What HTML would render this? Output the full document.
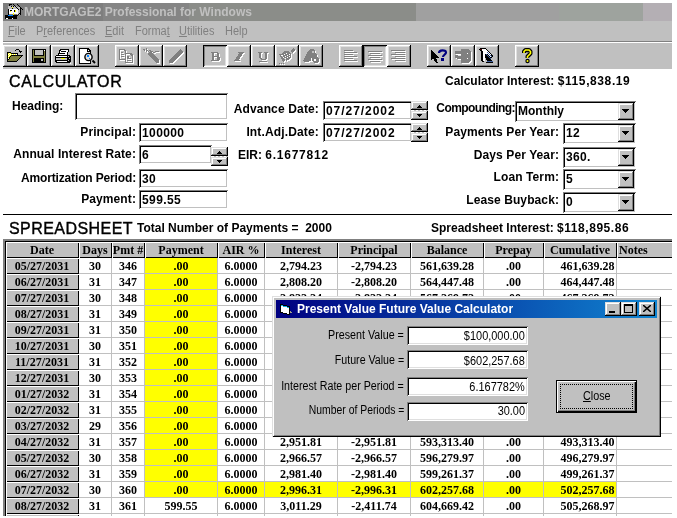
<!DOCTYPE html>
<html><head><meta charset="utf-8"><style>
html,body{margin:0;padding:0;background:#fff;}
body{width:677px;height:518px;position:relative;overflow:hidden;}
#clip{position:absolute;left:3px;top:3px;width:669px;height:513px;overflow:hidden;}
#inner{position:absolute;left:-3px;top:-3px;width:677px;height:518px;will-change:transform;}
.t{position:absolute;white-space:nowrap;}
.r{position:absolute;box-sizing:border-box;}
u{text-decoration:underline;text-underline-offset:1px;}
</style></head><body><div id="clip"><div id="inner">
<div class="r" style="left:3px;top:3px;width:100px;height:18px;background:#7e7e7e;"></div>
<div class="r" style="left:103px;top:3px;width:86px;height:18px;background:#858585;"></div>
<div class="r" style="left:189px;top:3px;width:227px;height:18px;background:#8b8d89;"></div>
<div class="r" style="left:416px;top:3px;width:143px;height:18px;background:#a0a0a0;"></div>
<div class="r" style="left:559px;top:3px;width:84px;height:18px;background:#9ea39e;"></div>
<div class="r" style="left:643px;top:3px;width:29px;height:18px;background:#b4afb4;"></div>
<svg class="r" style="left:3px;top:3px" width="20" height="18" shape-rendering="crispEdges"><rect x="5" y="3" width="9" height="3" fill="#c0c0c0"/><rect x="14" y="4" width="3" height="8" fill="#c0c0c0"/><rect x="6" y="6" width="9" height="5" fill="#fff"/><rect x="6" y="1" width="3" height="1" fill="#000"/><rect x="6" y="1" width="1" height="2" fill="#000"/><rect x="5" y="6" width="1" height="6" fill="#000"/><rect x="17" y="5" width="1" height="7" fill="#000"/><rect x="9" y="4" width="1" height="1" fill="#ff0"/><rect x="8" y="3" width="1" height="1" fill="#000"/><rect x="10" y="3" width="1" height="1" fill="#000"/><rect x="9" y="5" width="1" height="1" fill="#000"/><rect x="7" y="7" width="2" height="1" fill="#000"/><rect x="11" y="7" width="1" height="2" fill="#000"/><rect x="7" y="8" width="1" height="1" fill="#ff0"/><rect x="12" y="7" width="1" height="2" fill="#ff0"/><rect x="10" y="10" width="1" height="2" fill="#ff0"/><rect x="2" y="12" width="12" height="4" fill="#000"/><rect x="5" y="12" width="5" height="1" fill="#0080ff"/><rect x="3" y="15" width="2" height="1" fill="#fff"/><rect x="9" y="15" width="1" height="1" fill="#fff"/><rect x="14" y="12" width="1" height="1" fill="#000"/><rect x="15" y="11" width="1" height="1" fill="#000"/><rect x="16" y="10" width="1" height="1" fill="#000"/><rect x="10" y="1" width="1" height="1" fill="#000"/><rect x="14" y="1" width="1" height="1" fill="#000"/><rect x="11" y="2" width="1" height="1" fill="#000"/><rect x="15" y="2" width="1" height="1" fill="#000"/><rect x="12" y="3" width="1" height="1" fill="#000"/><rect x="16" y="3" width="1" height="1" fill="#000"/><rect x="13" y="4" width="1" height="1" fill="#000"/><rect x="17" y="4" width="1" height="1" fill="#000"/><rect x="14" y="5" width="1" height="1" fill="#000"/><rect x="18" y="5" width="1" height="1" fill="#000"/><rect x="15" y="6" width="1" height="1" fill="#000"/><rect x="19" y="6" width="1" height="1" fill="#000"/></svg>
<div id="title" class="t" style="left:24px;top:5.84px;font:bold 12px/12px 'Liberation Sans', sans-serif;color:#c0c0c0">MORTGAGE2 Professional for Windows</div>
<div class="r" style="left:3px;top:21px;width:669px;height:20px;background:#c0c0c0;"></div>
<div class="r" style="left:3px;top:41px;width:669px;height:1px;background:#808080;"></div>
<div class="r" style="left:3px;top:42px;width:669px;height:1px;background:#fff;"></div>
<div id="m0" class="t" style="left:8px;top:24.84px;font:normal 12px/12px 'Liberation Sans', sans-serif;color:#808080;transform:scaleX(0.915);transform-origin:0 50%"><u>F</u>ile</div>
<div id="m1" class="t" style="left:36px;top:24.84px;font:normal 12px/12px 'Liberation Sans', sans-serif;color:#808080;transform:scaleX(0.915);transform-origin:0 50%">P<u>r</u>eferences</div>
<div id="m2" class="t" style="left:105px;top:24.84px;font:normal 12px/12px 'Liberation Sans', sans-serif;color:#808080;transform:scaleX(0.915);transform-origin:0 50%"><u>E</u>dit</div>
<div id="m3" class="t" style="left:135px;top:24.84px;font:normal 12px/12px 'Liberation Sans', sans-serif;color:#808080;transform:scaleX(0.915);transform-origin:0 50%">Forma<u>t</u></div>
<div id="m4" class="t" style="left:179px;top:24.84px;font:normal 12px/12px 'Liberation Sans', sans-serif;color:#808080;transform:scaleX(0.915);transform-origin:0 50%"><u>U</u>tilities</div>
<div id="m5" class="t" style="left:225px;top:24.84px;font:normal 12px/12px 'Liberation Sans', sans-serif;color:#808080;transform:scaleX(0.915);transform-origin:0 50%">Help</div>
<div class="r" style="left:3px;top:43px;width:669px;height:26px;background:#c0c0c0;"></div>
<div class="r" style="left:3px;top:45px;width:24px;height:22px;box-shadow:inset -1px -1px #000,inset 1px 1px #fff,inset -2px -2px #808080,inset 2px 2px #dfdfdf;background:#c0c0c0;"></div>
<svg class="r" style="left:3px;top:45px" width="24" height="22" viewBox="0 0 24 22" shape-rendering="crispEdges"><rect x="4" y="7" width="4" height="1" fill="#000"/><rect x="4" y="8" width="1" height="1" fill="#000"/><rect x="5" y="8" width="3" height="1" fill="#ff0"/><rect x="8" y="8" width="7" height="1" fill="#000"/><rect x="4" y="9" width="1" height="1" fill="#000"/><rect x="5" y="9" width="9" height="1" fill="#ff0"/><rect x="14" y="9" width="1" height="1" fill="#000"/><rect x="4" y="10" width="1" height="1" fill="#000"/><rect x="5" y="10" width="3" height="1" fill="#ff0"/><rect x="8" y="10" width="12" height="1" fill="#000"/><rect x="4" y="11" width="1" height="1" fill="#000"/><rect x="5" y="11" width="2" height="1" fill="#ff0"/><rect x="7" y="11" width="1" height="1" fill="#000"/><rect x="8" y="11" width="10" height="1" fill="#808040"/><rect x="18" y="11" width="1" height="1" fill="#000"/><rect x="4" y="12" width="1" height="1" fill="#000"/><rect x="5" y="12" width="1" height="1" fill="#ff0"/><rect x="6" y="12" width="1" height="1" fill="#000"/><rect x="7" y="12" width="10" height="1" fill="#808040"/><rect x="17" y="12" width="1" height="1" fill="#000"/><rect x="4" y="13" width="1" height="1" fill="#000"/><rect x="5" y="13" width="1" height="1" fill="#ff0"/><rect x="6" y="13" width="1" height="1" fill="#000"/><rect x="7" y="13" width="9" height="1" fill="#808040"/><rect x="16" y="13" width="1" height="1" fill="#000"/><rect x="4" y="14" width="2" height="1" fill="#000"/><rect x="6" y="14" width="9" height="1" fill="#808040"/><rect x="15" y="14" width="1" height="1" fill="#000"/><rect x="4" y="15" width="1" height="1" fill="#000"/><rect x="5" y="15" width="9" height="1" fill="#808040"/><rect x="14" y="15" width="1" height="1" fill="#000"/><rect x="4" y="16" width="10" height="1" fill="#000"/><rect x="6" y="8" width="1" height="1" fill="#fff"/><rect x="5" y="9" width="1" height="1" fill="#fff"/><rect x="7" y="9" width="1" height="1" fill="#fff"/><rect x="9" y="9" width="1" height="1" fill="#fff"/><rect x="11" y="9" width="1" height="1" fill="#fff"/><rect x="13" y="9" width="1" height="1" fill="#fff"/><rect x="6" y="10" width="1" height="1" fill="#fff"/><rect x="5" y="11" width="1" height="1" fill="#fff"/><rect x="5" y="13" width="1" height="1" fill="#fff"/><path d="M12 5h1v-1h3v1h1v1h-1v-1h-3v1h-1z" fill="#000"/><path d="M16 6h3v1h-1v1h-1v-1h-1z" fill="#000"/></svg>
<div class="r" style="left:27px;top:45px;width:24px;height:22px;box-shadow:inset -1px -1px #000,inset 1px 1px #fff,inset -2px -2px #808080,inset 2px 2px #dfdfdf;background:#c0c0c0;"></div>
<svg class="r" style="left:27px;top:45px" width="24" height="22" viewBox="0 0 24 22" shape-rendering="crispEdges"><rect x="5" y="4" width="14" height="14" fill="#000"/><rect x="6" y="5" width="12" height="12" fill="#808040"/>
<rect x="7" y="5" width="10" height="6" fill="#000"/><rect x="8" y="5" width="8" height="5" fill="#c0c0c0"/>
<rect x="7" y="13" width="10" height="4" fill="#000"/><rect x="14" y="14" width="2" height="2" fill="#c0c0c0"/><rect x="17" y="5" width="1" height="1" fill="#fff"/></svg>
<div class="r" style="left:51px;top:45px;width:24px;height:22px;box-shadow:inset -1px -1px #000,inset 1px 1px #fff,inset -2px -2px #808080,inset 2px 2px #dfdfdf;background:#c0c0c0;"></div>
<svg class="r" style="left:51px;top:45px" width="24" height="22" viewBox="0 0 24 22" shape-rendering="crispEdges"><path d="M9 4h9l-1 6H7z" fill="#000"/><path d="M10 5h7l-1 5H8z" fill="#fff"/><rect x="10" y="6" width="5" height="1" fill="#000"/><rect x="9" y="8" width="5" height="1" fill="#000"/>
<path d="M5 10h13l2 2v5l-2 1H5l-1-1v-6z" fill="#000"/><rect x="5" y="11" width="11" height="1" fill="#fff"/><rect x="5" y="13" width="11" height="2" fill="#c0c0c0"/><rect x="10" y="13" width="4" height="1" fill="#ff0"/><rect x="6" y="16" width="10" height="1" fill="#fff"/>
<rect x="17" y="11" width="1" height="1" fill="#c0c0c0"/><rect x="18" y="13" width="1" height="1" fill="#c0c0c0"/><rect x="17" y="15" width="1" height="1" fill="#c0c0c0"/><rect x="19" y="18" width="1" height="1" fill="#fff"/></svg>
<div class="r" style="left:75px;top:45px;width:24px;height:22px;box-shadow:inset -1px -1px #000,inset 1px 1px #fff,inset -2px -2px #808080,inset 2px 2px #dfdfdf;background:#c0c0c0;"></div>
<svg class="r" style="left:75px;top:45px" width="24" height="22" viewBox="0 0 24 22" shape-rendering="crispEdges"><path d="M4 3h9l3 3v13H4z" fill="#000"/><path d="M5 4h7v3h3v11H5z" fill="#fff"/><rect x="13" y="5" width="1" height="1" fill="#fff"/>
<path d="M17.5 15.5l2.5 2.5" stroke="#000" stroke-width="2" shape-rendering="auto"/>
<circle cx="13.5" cy="12" r="3.6" fill="#dfdfdf" stroke="#000" stroke-width="1.4" shape-rendering="auto"/><rect x="12" y="10" width="2" height="2" fill="#0080ff"/><rect x="14" y="13" width="1" height="1" fill="#0080ff"/><rect x="15" y="11" width="1" height="2" fill="#fff"/></svg>
<div class="r" style="left:115px;top:45px;width:24px;height:22px;box-shadow:inset -1px -1px #000,inset 1px 1px #fff,inset -2px -2px #808080,inset 2px 2px #dfdfdf;background:#c0c0c0;"></div>
<svg class="r" style="left:115px;top:45px" width="24" height="22" viewBox="0 0 24 22" shape-rendering="crispEdges"><g transform="translate(1,1)" fill="#fff" stroke="#fff"><path d="M4 4h5l2 2v3h-1V6H9V5H5v9h5v1H4z" stroke="none"/><rect x="6" y="7" width="2" height="1" stroke="none"/><rect x="6" y="9" width="3" height="1" stroke="none"/><rect x="6" y="11" width="3" height="1" stroke="none"/><path d="M10 8h6l2 2v8h-8z M11 9v8h6v-6h-1v-1h-1V9z" fill-rule="evenodd" stroke="none"/><rect x="12" y="11" width="2" height="2" stroke="none"/><rect x="12" y="13" width="4" height="1" stroke="none"/><rect x="12" y="15" width="4" height="1" stroke="none"/></g><g fill="#808080" stroke="#808080"><path d="M4 4h5l2 2v3h-1V6H9V5H5v9h5v1H4z" stroke="none"/><rect x="6" y="7" width="2" height="1" stroke="none"/><rect x="6" y="9" width="3" height="1" stroke="none"/><rect x="6" y="11" width="3" height="1" stroke="none"/><path d="M10 8h6l2 2v8h-8z M11 9v8h6v-6h-1v-1h-1V9z" fill-rule="evenodd" stroke="none"/><rect x="12" y="11" width="2" height="2" stroke="none"/><rect x="12" y="13" width="4" height="1" stroke="none"/><rect x="12" y="15" width="4" height="1" stroke="none"/></g></svg>
<div class="r" style="left:139px;top:45px;width:24px;height:22px;box-shadow:inset -1px -1px #000,inset 1px 1px #fff,inset -2px -2px #808080,inset 2px 2px #dfdfdf;background:#c0c0c0;"></div>
<svg class="r" style="left:139px;top:45px" width="24" height="22" viewBox="0 0 24 22" shape-rendering="crispEdges"><g transform="translate(1,1)" fill="#fff" stroke="#fff"><path d="M8 9l3-3 9 9v3h-3z" stroke="none"/><path d="M4 4h2v1h1v-2h1v2h1v1h1v-1h2v1h2v1h2v-1h4v1h-4v1h-2v-1h-2v-1h-2v1h-1v-1h-1v1h-1v-2h-1v1h-1v-1h-1z" stroke="none"/></g><g fill="#808080" stroke="#808080"><path d="M8 9l3-3 9 9v3h-3z" stroke="none"/><path d="M4 4h2v1h1v-2h1v2h1v1h1v-1h2v1h2v1h2v-1h4v1h-4v1h-2v-1h-2v-1h-2v1h-1v-1h-1v1h-1v-2h-1v1h-1v-1h-1z" stroke="none"/></g></svg>
<div class="r" style="left:163px;top:45px;width:24px;height:22px;box-shadow:inset -1px -1px #000,inset 1px 1px #fff,inset -2px -2px #808080,inset 2px 2px #dfdfdf;background:#c0c0c0;"></div>
<svg class="r" style="left:163px;top:45px" width="24" height="22" viewBox="0 0 24 22" shape-rendering="crispEdges"><g transform="translate(1,1)" fill="#fff" stroke="#fff"><path d="M17 4l3 3-11 11H6v-3z" stroke="none"/></g><g fill="#808080" stroke="#808080"><path d="M17 4l3 3-11 11H6v-3z" stroke="none"/></g></svg>
<div class="r" style="left:203px;top:45px;width:24px;height:22px;box-shadow:inset 1px 1px #000,inset -1px -1px #fff,inset 2px 2px #808080,inset -2px -2px #dfdfdf;background:#c0c0c0;"></div>
<svg class="r" style="left:203px;top:45px" width="24" height="22" viewBox="0 0 24 22" shape-rendering="crispEdges"><g transform="translate(1,1)" fill="#fff" stroke="#fff"><path d="M8 7h6l2 1v2l-1 1 2 1v3l-2 1H8v-1h1V8H8z M11 8v3h2l1-1V9l-1-1z M11 12v3h2l1-1v-1l-1-1z" fill-rule="evenodd" stroke="none"/></g><g fill="#808080" stroke="#808080"><path d="M8 7h6l2 1v2l-1 1 2 1v3l-2 1H8v-1h1V8H8z M11 8v3h2l1-1V9l-1-1z M11 12v3h2l1-1v-1l-1-1z" fill-rule="evenodd" stroke="none"/></g></svg>
<div class="r" style="left:227px;top:45px;width:24px;height:22px;box-shadow:inset -1px -1px #000,inset 1px 1px #fff,inset -2px -2px #808080,inset 2px 2px #dfdfdf;background:#c0c0c0;"></div>
<svg class="r" style="left:227px;top:45px" width="24" height="22" viewBox="0 0 24 22" shape-rendering="crispEdges"><g transform="translate(1,1)" fill="#fff" stroke="#fff"><path d="M11 7h6v1h-1l-4 7h1v1H7v-1h1l4-7h-1z" stroke="none"/></g><g fill="#808080" stroke="#808080"><path d="M11 7h6v1h-1l-4 7h1v1H7v-1h1l4-7h-1z" stroke="none"/></g></svg>
<div class="r" style="left:251px;top:45px;width:24px;height:22px;box-shadow:inset -1px -1px #000,inset 1px 1px #fff,inset -2px -2px #808080,inset 2px 2px #dfdfdf;background:#c0c0c0;"></div>
<svg class="r" style="left:251px;top:45px" width="24" height="22" viewBox="0 0 24 22" shape-rendering="crispEdges"><g transform="translate(1,1)" fill="#fff" stroke="#fff"><path d="M7 7h4v1h-1v5l1 1h2l1-1V8h-1V7h4v1h-1v5l-2 2h-4l-2-2V8H7z" stroke="none"/><rect x="8" y="16" width="8" height="1" stroke="none"/></g><g fill="#808080" stroke="#808080"><path d="M7 7h4v1h-1v5l1 1h2l1-1V8h-1V7h4v1h-1v5l-2 2h-4l-2-2V8H7z" stroke="none"/><rect x="8" y="16" width="8" height="1" stroke="none"/></g></svg>
<div class="r" style="left:275px;top:45px;width:24px;height:22px;box-shadow:inset -1px -1px #000,inset 1px 1px #fff,inset -2px -2px #808080,inset 2px 2px #dfdfdf;background:#c0c0c0;"></div>
<svg class="r" style="left:275px;top:45px" width="24" height="22" viewBox="0 0 24 22" shape-rendering="crispEdges"><g transform="translate(1,1)" fill="#fff" stroke="#fff"><path d="M15 6l3-3 2 2-3 3z" stroke="none"/><path d="M4 9h2l4-3h3l3 3v3l-3 3h-2l-3 2z M6 10v1l5 5h1l-5-5z" fill-rule="evenodd" stroke="none"/><rect x="4" y="18" width="1" height="1" stroke="none"/><rect x="6" y="18" width="1" height="1" stroke="none"/><rect x="8" y="18" width="1" height="1" stroke="none"/></g><g fill="#808080" stroke="#808080"><path d="M15 6l3-3 2 2-3 3z" stroke="none"/><path d="M4 9h2l4-3h3l3 3v3l-3 3h-2l-3 2z M6 10v1l5 5h1l-5-5z" fill-rule="evenodd" stroke="none"/><rect x="4" y="18" width="1" height="1" stroke="none"/><rect x="6" y="18" width="1" height="1" stroke="none"/><rect x="8" y="18" width="1" height="1" stroke="none"/></g><path d="M7 10h1v1H7zM9 9h1v1H9zM11 8h1v1h-1zM8 12h1v1H8zM10 11h1v1h-1zM12 10h1v1h-1zM14 9h1v1h-1zM10 13h1v1h-1zM12 12h1v1h-1zM14 11h1v1h-1z" fill="#fff"/></svg>
<div class="r" style="left:299px;top:45px;width:24px;height:22px;box-shadow:inset -1px -1px #000,inset 1px 1px #fff,inset -2px -2px #808080,inset 2px 2px #dfdfdf;background:#c0c0c0;"></div>
<svg class="r" style="left:299px;top:45px" width="24" height="22" viewBox="0 0 24 22" shape-rendering="crispEdges"><g transform="translate(1,1)" fill="#fff" stroke="#fff"><path d="M8 8l3-4h3l2 2v2l2 1v3l2 1v4l-2 1h-3l-1-2h-4l-1 1H5l-1-1 2-4z" stroke="none"/></g><g fill="#808080" stroke="#808080"><path d="M8 8l3-4h3l2 2v2l2 1v3l2 1v4l-2 1h-3l-1-2h-4l-1 1H5l-1-1 2-4z" stroke="none"/></g><rect x="13" y="6" width="2" height="2" fill="#c0c0c0"/><rect x="12" y="13" width="1" height="3" fill="#fff"/><rect x="15" y="14" width="2" height="2" fill="#fff"/></svg>
<div class="r" style="left:339px;top:45px;width:24px;height:22px;box-shadow:inset -1px -1px #000,inset 1px 1px #fff,inset -2px -2px #808080,inset 2px 2px #dfdfdf;background:#c0c0c0;"></div>
<svg class="r" style="left:339px;top:45px" width="24" height="22" viewBox="0 0 24 22" shape-rendering="crispEdges"><rect x="5" y="5" width="9" height="1" fill="#808080"/><rect x="6" y="6" width="9" height="1" fill="#fff"/><rect x="5" y="7" width="13" height="1" fill="#808080"/><rect x="6" y="8" width="13" height="1" fill="#fff"/><rect x="5" y="9" width="9" height="1" fill="#808080"/><rect x="6" y="10" width="9" height="1" fill="#fff"/><rect x="5" y="11" width="13" height="1" fill="#808080"/><rect x="6" y="12" width="13" height="1" fill="#fff"/><rect x="5" y="13" width="9" height="1" fill="#808080"/><rect x="6" y="14" width="9" height="1" fill="#fff"/><rect x="5" y="15" width="13" height="1" fill="#808080"/><rect x="6" y="16" width="13" height="1" fill="#fff"/></svg>
<div class="r" style="left:363px;top:45px;width:24px;height:22px;box-shadow:inset 1px 1px #000,inset -1px -1px #fff,inset 2px 2px #808080,inset -2px -2px #dfdfdf;background:#c0c0c0;"></div>
<svg class="r" style="left:363px;top:45px" width="24" height="22" viewBox="0 0 24 22" shape-rendering="crispEdges"><rect x="5" y="6" width="14" height="1" fill="#808080"/><rect x="6" y="7" width="14" height="1" fill="#fff"/><rect x="7" y="8" width="10" height="1" fill="#808080"/><rect x="8" y="9" width="10" height="1" fill="#fff"/><rect x="5" y="10" width="14" height="1" fill="#808080"/><rect x="6" y="11" width="14" height="1" fill="#fff"/><rect x="7" y="12" width="10" height="1" fill="#808080"/><rect x="8" y="13" width="10" height="1" fill="#fff"/><rect x="5" y="14" width="14" height="1" fill="#808080"/><rect x="6" y="15" width="14" height="1" fill="#fff"/><rect x="7" y="16" width="10" height="1" fill="#808080"/><rect x="8" y="17" width="10" height="1" fill="#fff"/></svg>
<div class="r" style="left:387px;top:45px;width:24px;height:22px;box-shadow:inset -1px -1px #000,inset 1px 1px #fff,inset -2px -2px #808080,inset 2px 2px #dfdfdf;background:#c0c0c0;"></div>
<svg class="r" style="left:387px;top:45px" width="24" height="22" viewBox="0 0 24 22" shape-rendering="crispEdges"><rect x="4" y="5" width="14" height="1" fill="#808080"/><rect x="5" y="6" width="14" height="1" fill="#fff"/><rect x="8" y="7" width="10" height="1" fill="#808080"/><rect x="9" y="8" width="10" height="1" fill="#fff"/><rect x="4" y="9" width="14" height="1" fill="#808080"/><rect x="5" y="10" width="14" height="1" fill="#fff"/><rect x="8" y="11" width="10" height="1" fill="#808080"/><rect x="9" y="12" width="10" height="1" fill="#fff"/><rect x="4" y="13" width="14" height="1" fill="#808080"/><rect x="5" y="14" width="14" height="1" fill="#fff"/><rect x="8" y="15" width="10" height="1" fill="#808080"/><rect x="9" y="16" width="10" height="1" fill="#fff"/></svg>
<div class="r" style="left:427px;top:45px;width:24px;height:22px;box-shadow:inset -1px -1px #000,inset 1px 1px #fff,inset -2px -2px #808080,inset 2px 2px #dfdfdf;background:#c0c0c0;"></div>
<svg class="r" style="left:427px;top:45px" width="24" height="22" viewBox="0 0 24 22" shape-rendering="crispEdges"><path d="M4 4v11l2-2 3 5h2l-2-5h3z" fill="#000"/>
<path d="M12 8C12 4.5 19 4.5 19 7.5C19 9.5 16 10 16 12" stroke="#000080" stroke-width="2.2" fill="none" shape-rendering="auto"/><rect x="14" y="13" width="3" height="3" fill="#000080"/></svg>
<div class="r" style="left:451px;top:45px;width:24px;height:22px;box-shadow:inset -1px -1px #000,inset 1px 1px #fff,inset -2px -2px #808080,inset 2px 2px #dfdfdf;background:#c0c0c0;"></div>
<svg class="r" style="left:451px;top:45px" width="24" height="22" viewBox="0 0 24 22" shape-rendering="crispEdges"><g transform="translate(1,1)" fill="#fff" stroke="#fff"><path d="M10 4h7l3 2v9l-3 3h-7v-4H6v-1H4v-3h6V9H4V6h6z" stroke="none"/></g><g fill="#808080" stroke="#808080"><path d="M10 4h7l3 2v9l-3 3h-7v-4H6v-1H4v-3h6V9H4V6h6z" stroke="none"/></g><rect x="16" y="8" width="1" height="1" fill="#fff"/><rect x="16" y="13" width="1" height="1" fill="#fff"/><rect x="7" y="10" width="3" height="1" fill="#dfdfdf"/></svg>
<div class="r" style="left:475px;top:45px;width:24px;height:22px;box-shadow:inset -1px -1px #000,inset 1px 1px #fff,inset -2px -2px #808080,inset 2px 2px #dfdfdf;background:#c0c0c0;"></div>
<svg class="r" style="left:475px;top:45px" width="24" height="22" viewBox="0 0 24 22" shape-rendering="crispEdges"><path d="M5 3h5l8 8-2 2v3h-4l-1-2-2-2v5H7l-1-2V7L4 5z" fill="#000"/><path d="M6 4h4l6 6v1l-1 1-2-2-1-1h-2v7H8V7L6 5z" fill="#fff"/><rect x="5" y="4" width="2" height="1" fill="#400000"/>
<path d="M12 7l5 5M11 9l5 5" stroke="#4060a0" fill="none"/><rect x="12" y="16" width="6" height="1" fill="#4060a0"/><rect x="11" y="17" width="7" height="1" fill="#000"/><rect x="12" y="15" width="5" height="1" fill="#000"/></svg>
<div class="r" style="left:515px;top:45px;width:24px;height:22px;box-shadow:inset -1px -1px #000,inset 1px 1px #fff,inset -2px -2px #808080,inset 2px 2px #dfdfdf;background:#c0c0c0;"></div>
<svg class="r" style="left:515px;top:45px" width="24" height="22" viewBox="0 0 24 22" shape-rendering="crispEdges"><path d="M9 8V6.5L10.5 5h3.5l1.5 1.5v2L12.5 11.5v1.5" stroke="#000" stroke-width="4" fill="none" shape-rendering="auto" stroke-linejoin="round"/>
<path d="M9 8V6.5L10.5 5h3.5l1.5 1.5v2L12.5 11.5v1.5" stroke="#ff0" stroke-width="1.6" fill="none" shape-rendering="auto"/>
<circle cx="12.5" cy="16" r="2.2" fill="#000" shape-rendering="auto"/><circle cx="12.5" cy="16" r="1" fill="#ff0" shape-rendering="auto"/><rect x="11" y="7" width="2" height="1" fill="#808080"/></svg>
<div id="calc" class="t" style="left:9px;top:74.46px;font:normal 16px/16px 'Liberation Sans', sans-serif;letter-spacing:0.75px;-webkit-text-stroke:0.4px #000">CALCULATOR</div>
<div class="t" style="left:445px;top:74.84px;font:bold 12px/12px 'Liberation Sans', sans-serif;color:#000;">Calculator Interest: <span style="letter-spacing:0.6px">$115,838.19</span></div>
<div class="t" style="left:12px;top:99.84px;font:bold 12px/12px 'Liberation Sans', sans-serif;color:#000;">Heading:</div>
<div class="r" style="left:75px;top:93px;width:153px;height:27px;box-shadow:inset 1px 1px #808080,inset -1px -1px #fff,inset 2px 2px #000,inset -2px -2px #c0c0c0;background:#fff;"></div>
<div class="t" style="right:358px;text-align:right;top:102.84px;font:bold 12px/12px 'Liberation Sans', sans-serif;color:#000;letter-spacing:0.15px;">Advance Date:</div>
<div class="t" style="right:358px;text-align:right;top:125.84px;font:bold 12px/12px 'Liberation Sans', sans-serif;color:#000;letter-spacing:0.15px;">Int.Adj.Date:</div>
<div class="t" style="left:238px;top:148.84px;font:bold 12px/12px 'Liberation Sans', sans-serif;color:#000;">EIR: <span style="letter-spacing:0.75px">6.1677812</span></div>
<div class="r" style="left:323px;top:101px;width:89px;height:19px;box-shadow:inset 1px 1px #808080,inset -1px -1px #fff,inset 2px 2px #000,inset -2px -2px #c0c0c0;background:#fff;"></div>
<div class="t" style="left:326px;top:104.84px;font:bold 12px/12px 'Liberation Sans', sans-serif;color:#000;letter-spacing:0.95px;">07/27/2002</div>
<div class="r" style="left:323px;top:123px;width:89px;height:19px;box-shadow:inset 1px 1px #808080,inset -1px -1px #fff,inset 2px 2px #000,inset -2px -2px #c0c0c0;background:#fff;"></div>
<div class="t" style="left:326px;top:126.84px;font:bold 12px/12px 'Liberation Sans', sans-serif;color:#000;letter-spacing:0.95px;">07/27/2002</div>
<div class="t" style="right:162px;text-align:right;top:101.84px;font:bold 12px/12px 'Liberation Sans', sans-serif;color:#000;letter-spacing:-0.55px;">Compounding:</div>
<div class="r" style="left:515px;top:101px;width:121px;height:21px;box-shadow:inset 1px 1px #808080,inset -1px -1px #fff,inset 2px 2px #000,inset -2px -2px #c0c0c0;background:#fff;"></div>
<div class="t" style="left:518px;top:104.84px;font:bold 12px/12px 'Liberation Sans', sans-serif;color:#000;letter-spacing:0px;">Monthly</div>
<div class="r" style="left:618px;top:103px;width:16px;height:17px;box-shadow:inset -1px -1px #000,inset 1px 1px #dfdfdf,inset -2px -2px #808080,inset 2px 2px #fff;background:#c0c0c0;"></div>
<svg class="r" style="left:618px;top:103px" width="16" height="17" shape-rendering="crispEdges"><path d="M4 6h7v1h-1v1h-1v1h-1v1h-1v-1h-1v-1h-1v-1h-1z" fill="#000"/></svg>
<div class="r" style="left:563px;top:123px;width:73px;height:21px;box-shadow:inset 1px 1px #808080,inset -1px -1px #fff,inset 2px 2px #000,inset -2px -2px #c0c0c0;background:#fff;"></div>
<div class="t" style="left:566px;top:126.84px;font:bold 12px/12px 'Liberation Sans', sans-serif;color:#000;letter-spacing:0.3px;">12</div>
<div class="t" style="right:118px;text-align:right;top:125.84px;font:bold 12px/12px 'Liberation Sans', sans-serif;color:#000;letter-spacing:0.1px;">Payments Per Year:</div>
<div class="r" style="left:618px;top:125px;width:16px;height:17px;box-shadow:inset -1px -1px #000,inset 1px 1px #dfdfdf,inset -2px -2px #808080,inset 2px 2px #fff;background:#c0c0c0;"></div>
<svg class="r" style="left:618px;top:125px" width="16" height="17" shape-rendering="crispEdges"><path d="M4 6h7v1h-1v1h-1v1h-1v1h-1v-1h-1v-1h-1v-1h-1z" fill="#000"/></svg>
<div class="r" style="left:563px;top:147px;width:73px;height:21px;box-shadow:inset 1px 1px #808080,inset -1px -1px #fff,inset 2px 2px #000,inset -2px -2px #c0c0c0;background:#fff;"></div>
<div class="t" style="left:566px;top:150.84px;font:bold 12px/12px 'Liberation Sans', sans-serif;color:#000;letter-spacing:0.3px;">360.</div>
<div class="t" style="right:118px;text-align:right;top:148.84px;font:bold 12px/12px 'Liberation Sans', sans-serif;color:#000;letter-spacing:0.1px;">Days Per Year:</div>
<div class="r" style="left:618px;top:149px;width:16px;height:17px;box-shadow:inset -1px -1px #000,inset 1px 1px #dfdfdf,inset -2px -2px #808080,inset 2px 2px #fff;background:#c0c0c0;"></div>
<svg class="r" style="left:618px;top:149px" width="16" height="17" shape-rendering="crispEdges"><path d="M4 6h7v1h-1v1h-1v1h-1v1h-1v-1h-1v-1h-1v-1h-1z" fill="#000"/></svg>
<div class="r" style="left:563px;top:169px;width:73px;height:21px;box-shadow:inset 1px 1px #808080,inset -1px -1px #fff,inset 2px 2px #000,inset -2px -2px #c0c0c0;background:#fff;"></div>
<div class="t" style="left:566px;top:172.84px;font:bold 12px/12px 'Liberation Sans', sans-serif;color:#000;letter-spacing:0.3px;">5</div>
<div class="t" style="right:118px;text-align:right;top:170.84px;font:bold 12px/12px 'Liberation Sans', sans-serif;color:#000;letter-spacing:0.1px;">Loan Term:</div>
<div class="r" style="left:618px;top:171px;width:16px;height:17px;box-shadow:inset -1px -1px #000,inset 1px 1px #dfdfdf,inset -2px -2px #808080,inset 2px 2px #fff;background:#c0c0c0;"></div>
<svg class="r" style="left:618px;top:171px" width="16" height="17" shape-rendering="crispEdges"><path d="M4 6h7v1h-1v1h-1v1h-1v1h-1v-1h-1v-1h-1v-1h-1z" fill="#000"/></svg>
<div class="r" style="left:563px;top:192px;width:73px;height:21px;box-shadow:inset 1px 1px #808080,inset -1px -1px #fff,inset 2px 2px #000,inset -2px -2px #c0c0c0;background:#fff;"></div>
<div class="t" style="left:566px;top:195.84px;font:bold 12px/12px 'Liberation Sans', sans-serif;color:#000;letter-spacing:0.3px;">0</div>
<div class="t" style="right:118px;text-align:right;top:193.84px;font:bold 12px/12px 'Liberation Sans', sans-serif;color:#000;letter-spacing:0.1px;">Lease Buyback:</div>
<div class="r" style="left:618px;top:194px;width:16px;height:17px;box-shadow:inset -1px -1px #000,inset 1px 1px #dfdfdf,inset -2px -2px #808080,inset 2px 2px #fff;background:#c0c0c0;"></div>
<svg class="r" style="left:618px;top:194px" width="16" height="17" shape-rendering="crispEdges"><path d="M4 6h7v1h-1v1h-1v1h-1v1h-1v-1h-1v-1h-1v-1h-1z" fill="#000"/></svg>
<div class="t" style="right:541px;text-align:right;top:125.84px;font:bold 12px/12px 'Liberation Sans', sans-serif;color:#000;letter-spacing:0.1px;">Principal:</div>
<div class="r" style="left:139px;top:123px;width:89px;height:19px;box-shadow:inset 1px 1px #808080,inset -1px -1px #fff,inset 2px 2px #000,inset -2px -2px #c0c0c0;background:#fff;"></div>
<div class="t" style="left:142px;top:126.84px;font:bold 12px/12px 'Liberation Sans', sans-serif;color:#000;letter-spacing:0.4px;">100000</div>
<div class="t" style="right:541px;text-align:right;top:147.84px;font:bold 12px/12px 'Liberation Sans', sans-serif;color:#000;letter-spacing:0.1px;">Annual Interest Rate:</div>
<div class="r" style="left:139px;top:145px;width:73px;height:19px;box-shadow:inset 1px 1px #808080,inset -1px -1px #fff,inset 2px 2px #000,inset -2px -2px #c0c0c0;background:#fff;"></div>
<div class="t" style="left:142px;top:148.84px;font:bold 12px/12px 'Liberation Sans', sans-serif;color:#000;letter-spacing:0.4px;">6</div>
<div class="t" style="right:541px;text-align:right;top:171.84px;font:bold 12px/12px 'Liberation Sans', sans-serif;color:#000;letter-spacing:-0.15px;">Amortization Period:</div>
<div class="r" style="left:139px;top:169px;width:89px;height:19px;box-shadow:inset 1px 1px #808080,inset -1px -1px #fff,inset 2px 2px #000,inset -2px -2px #c0c0c0;background:#fff;"></div>
<div class="t" style="left:142px;top:172.84px;font:bold 12px/12px 'Liberation Sans', sans-serif;color:#000;letter-spacing:0.4px;">30</div>
<div class="t" style="right:541px;text-align:right;top:192.84px;font:bold 12px/12px 'Liberation Sans', sans-serif;color:#000;letter-spacing:0.1px;">Payment:</div>
<div class="r" style="left:139px;top:190px;width:89px;height:19px;box-shadow:inset 1px 1px #808080,inset -1px -1px #fff,inset 2px 2px #000,inset -2px -2px #c0c0c0;background:#fff;"></div>
<div class="t" style="left:142px;top:193.84px;font:bold 12px/12px 'Liberation Sans', sans-serif;color:#000;letter-spacing:0.4px;">599.55</div>
<div class="r" style="left:411px;top:101px;width:17px;height:9px;box-shadow:inset -1px -1px #000,inset 1px 1px #dfdfdf,inset -2px -2px #808080,inset 2px 2px #fff;background:#c0c0c0;"></div>
<div class="r" style="left:411px;top:111px;width:17px;height:9px;box-shadow:inset -1px -1px #000,inset 1px 1px #dfdfdf,inset -2px -2px #808080,inset 2px 2px #fff;background:#c0c0c0;"></div>
<div class="r" style="left:412px;top:110px;width:16px;height:1px;background:repeating-linear-gradient(90deg,#fff 0 2px,#c0c0c0 2px 4px)"></div>
<svg class="r" style="left:411px;top:101px" width="17" height="19" shape-rendering="crispEdges"><path d="M8 4h1v1h1v1h1v1h-5v-1h1v-1h1z" fill="#000"/><path d="M6 13h5v1h-1v1h-1v1h-1v-1h-1v-1h-1z" fill="#000"/></svg>
<div class="r" style="left:411px;top:123px;width:17px;height:9px;box-shadow:inset -1px -1px #000,inset 1px 1px #dfdfdf,inset -2px -2px #808080,inset 2px 2px #fff;background:#c0c0c0;"></div>
<div class="r" style="left:411px;top:133px;width:17px;height:9px;box-shadow:inset -1px -1px #000,inset 1px 1px #dfdfdf,inset -2px -2px #808080,inset 2px 2px #fff;background:#c0c0c0;"></div>
<div class="r" style="left:412px;top:132px;width:16px;height:1px;background:repeating-linear-gradient(90deg,#fff 0 2px,#c0c0c0 2px 4px)"></div>
<svg class="r" style="left:411px;top:123px" width="17" height="19" shape-rendering="crispEdges"><path d="M8 4h1v1h1v1h1v1h-5v-1h1v-1h1z" fill="#000"/><path d="M6 13h5v1h-1v1h-1v1h-1v-1h-1v-1h-1z" fill="#000"/></svg>
<div class="r" style="left:211px;top:147px;width:17px;height:9px;box-shadow:inset -1px -1px #000,inset 1px 1px #dfdfdf,inset -2px -2px #808080,inset 2px 2px #fff;background:#c0c0c0;"></div>
<div class="r" style="left:211px;top:157px;width:17px;height:9px;box-shadow:inset -1px -1px #000,inset 1px 1px #dfdfdf,inset -2px -2px #808080,inset 2px 2px #fff;background:#c0c0c0;"></div>
<div class="r" style="left:212px;top:156px;width:16px;height:1px;background:repeating-linear-gradient(90deg,#fff 0 2px,#c0c0c0 2px 4px)"></div>
<svg class="r" style="left:211px;top:147px" width="17" height="19" shape-rendering="crispEdges"><path d="M8 4h1v1h1v1h1v1h-5v-1h1v-1h1z" fill="#000"/><path d="M6 13h5v1h-1v1h-1v1h-1v-1h-1v-1h-1z" fill="#000"/></svg>
<div class="r" style="left:3px;top:214px;width:669px;height:1px;background:#000;"></div>
<div id="spread" class="t" style="left:9px;top:221.46px;font:normal 16px/16px 'Liberation Sans', sans-serif;letter-spacing:0.45px;-webkit-text-stroke:0.4px #000">SPREADSHEET</div>
<div class="t" style="left:137px;top:221.84px;font:bold 12px/12px 'Liberation Sans', sans-serif;color:#000;">Total Number of Payments =&nbsp; 2000</div>
<div class="t" style="left:431px;top:221.84px;font:bold 12px/12px 'Liberation Sans', sans-serif;color:#000;">Spreadsheet Interest: <span style="letter-spacing:0.55px">$118,895.86</span></div>
<div class="r" style="left:3px;top:239px;width:669px;height:2px;background:#808080;"></div>
<div class="r" style="left:3px;top:239px;width:2px;height:280px;background:#808080;"></div>
<div class="r" style="left:5px;top:241px;width:667px;height:1px;background:#000;"></div>
<div class="r" style="left:5px;top:241px;width:1px;height:280px;background:#000;"></div>
<div class="r" style="left:6px;top:242px;width:73px;height:16px;background:#c0c0c0;box-shadow:inset 1px 1px #fff,inset -1px -1px #000;"></div>
<div class="t" style="left:6px;width:72px;text-align:center;top:243.95px;font:bold 12px/12px 'Liberation Serif', serif;color:#000;">Date</div>
<div class="r" style="left:79px;top:242px;width:33px;height:16px;background:#c0c0c0;box-shadow:inset 1px 1px #fff,inset -1px -1px #000;"></div>
<div class="t" style="left:79px;width:32px;text-align:center;top:243.95px;font:bold 12px/12px 'Liberation Serif', serif;color:#000;">Days</div>
<div class="r" style="left:112px;top:242px;width:33px;height:16px;background:#c0c0c0;box-shadow:inset 1px 1px #fff,inset -1px -1px #000;"></div>
<div class="t" style="left:112px;width:32px;text-align:center;top:243.95px;font:bold 12px/12px 'Liberation Serif', serif;color:#000;">Pmt #</div>
<div class="r" style="left:145px;top:242px;width:73px;height:16px;background:#c0c0c0;box-shadow:inset 1px 1px #fff,inset -1px -1px #000;"></div>
<div class="t" style="left:145px;width:72px;text-align:center;top:243.95px;font:bold 12px/12px 'Liberation Serif', serif;color:#000;">Payment</div>
<div class="r" style="left:218px;top:242px;width:47px;height:16px;background:#c0c0c0;box-shadow:inset 1px 1px #fff,inset -1px -1px #000;"></div>
<div class="t" style="left:218px;width:46px;text-align:center;top:243.95px;font:bold 12px/12px 'Liberation Serif', serif;color:#000;">AIR %</div>
<div class="r" style="left:265px;top:242px;width:73px;height:16px;background:#c0c0c0;box-shadow:inset 1px 1px #fff,inset -1px -1px #000;"></div>
<div class="t" style="left:265px;width:72px;text-align:center;top:243.95px;font:bold 12px/12px 'Liberation Serif', serif;color:#000;">Interest</div>
<div class="r" style="left:338px;top:242px;width:73px;height:16px;background:#c0c0c0;box-shadow:inset 1px 1px #fff,inset -1px -1px #000;"></div>
<div class="t" style="left:338px;width:72px;text-align:center;top:243.95px;font:bold 12px/12px 'Liberation Serif', serif;color:#000;">Principal</div>
<div class="r" style="left:411px;top:242px;width:73px;height:16px;background:#c0c0c0;box-shadow:inset 1px 1px #fff,inset -1px -1px #000;"></div>
<div class="t" style="left:411px;width:72px;text-align:center;top:243.95px;font:bold 12px/12px 'Liberation Serif', serif;color:#000;">Balance</div>
<div class="r" style="left:484px;top:242px;width:60px;height:16px;background:#c0c0c0;box-shadow:inset 1px 1px #fff,inset -1px -1px #000;"></div>
<div class="t" style="left:484px;width:59px;text-align:center;top:243.95px;font:bold 12px/12px 'Liberation Serif', serif;color:#000;">Prepay</div>
<div class="r" style="left:544px;top:242px;width:73px;height:16px;background:#c0c0c0;box-shadow:inset 1px 1px #fff,inset -1px -1px #000;"></div>
<div class="t" style="left:544px;width:72px;text-align:center;top:243.95px;font:bold 12px/12px 'Liberation Serif', serif;color:#000;">Cumulative</div>
<div class="r" style="left:617px;top:242px;width:184px;height:16px;background:#c0c0c0;box-shadow:inset 1px 1px #fff,inset -1px -1px #000;"></div>
<div class="t" style="left:619px;top:243.95px;font:bold 12px/12px 'Liberation Serif', serif">Notes</div>
<div class="r" style="left:6px;top:258px;width:73px;height:16px;background:#c0c0c0;box-shadow:inset 1px 1px #fff,inset -1px -1px #000;"></div>
<div class="t" style="left:6px;width:72px;text-align:center;top:259.95px;font:bold 12px/12px 'Liberation Serif', serif;color:#000;">05/27/2031</div>
<div class="r" style="left:79px;top:258px;width:33px;height:16px;background:#fff;box-shadow:inset -1px -1px #c0c0c0;"></div>
<div class="t" style="left:79px;width:32px;text-align:center;top:259.95px;font:bold 12px/12px 'Liberation Serif', serif;color:#000;">30</div>
<div class="r" style="left:112px;top:258px;width:33px;height:16px;background:#fff;box-shadow:inset -1px -1px #c0c0c0;"></div>
<div class="t" style="left:112px;width:32px;text-align:center;top:259.95px;font:bold 12px/12px 'Liberation Serif', serif;color:#000;">346</div>
<div class="r" style="left:145px;top:258px;width:73px;height:16px;background:#ff0;box-shadow:inset -1px -1px #c0c0c0;"></div>
<div class="t" style="left:145px;width:72px;text-align:center;top:259.95px;font:bold 12px/12px 'Liberation Serif', serif;color:#000;">.00</div>
<div class="r" style="left:218px;top:258px;width:47px;height:16px;background:#fff;box-shadow:inset -1px -1px #c0c0c0;"></div>
<div class="t" style="left:218px;width:46px;text-align:center;top:259.95px;font:bold 12px/12px 'Liberation Serif', serif;color:#000;">6.0000</div>
<div class="r" style="left:265px;top:258px;width:73px;height:16px;background:#fff;box-shadow:inset -1px -1px #c0c0c0;"></div>
<div class="t" style="left:265px;width:72px;text-align:center;top:259.95px;font:bold 12px/12px 'Liberation Serif', serif;color:#000;">2,794.23</div>
<div class="r" style="left:338px;top:258px;width:73px;height:16px;background:#fff;box-shadow:inset -1px -1px #c0c0c0;"></div>
<div class="t" style="left:338px;width:72px;text-align:center;top:259.95px;font:bold 12px/12px 'Liberation Serif', serif;color:#000;">-2,794.23</div>
<div class="r" style="left:411px;top:258px;width:73px;height:16px;background:#fff;box-shadow:inset -1px -1px #c0c0c0;"></div>
<div class="t" style="left:411px;width:72px;text-align:center;top:259.95px;font:bold 12px/12px 'Liberation Serif', serif;color:#000;">561,639.28</div>
<div class="r" style="left:484px;top:258px;width:60px;height:16px;background:#fff;box-shadow:inset -1px -1px #c0c0c0;"></div>
<div class="t" style="left:484px;width:59px;text-align:center;top:259.95px;font:bold 12px/12px 'Liberation Serif', serif;color:#000;">.00</div>
<div class="r" style="left:544px;top:258px;width:73px;height:16px;background:#fff;box-shadow:inset -1px -1px #c0c0c0;"></div>
<div class="t" style="right:62.5px;text-align:right;top:259.95px;font:bold 12px/12px 'Liberation Serif', serif">461,639.28</div>
<div class="r" style="left:617px;top:258px;width:184px;height:16px;background:#fff;box-shadow:inset -1px -1px #c0c0c0;"></div>
<div class="r" style="left:6px;top:274px;width:73px;height:16px;background:#c0c0c0;box-shadow:inset 1px 1px #fff,inset -1px -1px #000;"></div>
<div class="t" style="left:6px;width:72px;text-align:center;top:275.95px;font:bold 12px/12px 'Liberation Serif', serif;color:#000;">06/27/2031</div>
<div class="r" style="left:79px;top:274px;width:33px;height:16px;background:#fff;box-shadow:inset -1px -1px #c0c0c0;"></div>
<div class="t" style="left:79px;width:32px;text-align:center;top:275.95px;font:bold 12px/12px 'Liberation Serif', serif;color:#000;">31</div>
<div class="r" style="left:112px;top:274px;width:33px;height:16px;background:#fff;box-shadow:inset -1px -1px #c0c0c0;"></div>
<div class="t" style="left:112px;width:32px;text-align:center;top:275.95px;font:bold 12px/12px 'Liberation Serif', serif;color:#000;">347</div>
<div class="r" style="left:145px;top:274px;width:73px;height:16px;background:#ff0;box-shadow:inset -1px -1px #c0c0c0;"></div>
<div class="t" style="left:145px;width:72px;text-align:center;top:275.95px;font:bold 12px/12px 'Liberation Serif', serif;color:#000;">.00</div>
<div class="r" style="left:218px;top:274px;width:47px;height:16px;background:#fff;box-shadow:inset -1px -1px #c0c0c0;"></div>
<div class="t" style="left:218px;width:46px;text-align:center;top:275.95px;font:bold 12px/12px 'Liberation Serif', serif;color:#000;">6.0000</div>
<div class="r" style="left:265px;top:274px;width:73px;height:16px;background:#fff;box-shadow:inset -1px -1px #c0c0c0;"></div>
<div class="t" style="left:265px;width:72px;text-align:center;top:275.95px;font:bold 12px/12px 'Liberation Serif', serif;color:#000;">2,808.20</div>
<div class="r" style="left:338px;top:274px;width:73px;height:16px;background:#fff;box-shadow:inset -1px -1px #c0c0c0;"></div>
<div class="t" style="left:338px;width:72px;text-align:center;top:275.95px;font:bold 12px/12px 'Liberation Serif', serif;color:#000;">-2,808.20</div>
<div class="r" style="left:411px;top:274px;width:73px;height:16px;background:#fff;box-shadow:inset -1px -1px #c0c0c0;"></div>
<div class="t" style="left:411px;width:72px;text-align:center;top:275.95px;font:bold 12px/12px 'Liberation Serif', serif;color:#000;">564,447.48</div>
<div class="r" style="left:484px;top:274px;width:60px;height:16px;background:#fff;box-shadow:inset -1px -1px #c0c0c0;"></div>
<div class="t" style="left:484px;width:59px;text-align:center;top:275.95px;font:bold 12px/12px 'Liberation Serif', serif;color:#000;">.00</div>
<div class="r" style="left:544px;top:274px;width:73px;height:16px;background:#fff;box-shadow:inset -1px -1px #c0c0c0;"></div>
<div class="t" style="right:62.5px;text-align:right;top:275.95px;font:bold 12px/12px 'Liberation Serif', serif">464,447.48</div>
<div class="r" style="left:617px;top:274px;width:184px;height:16px;background:#fff;box-shadow:inset -1px -1px #c0c0c0;"></div>
<div class="r" style="left:6px;top:290px;width:73px;height:16px;background:#c0c0c0;box-shadow:inset 1px 1px #fff,inset -1px -1px #000;"></div>
<div class="t" style="left:6px;width:72px;text-align:center;top:291.95px;font:bold 12px/12px 'Liberation Serif', serif;color:#000;">07/27/2031</div>
<div class="r" style="left:79px;top:290px;width:33px;height:16px;background:#fff;box-shadow:inset -1px -1px #c0c0c0;"></div>
<div class="t" style="left:79px;width:32px;text-align:center;top:291.95px;font:bold 12px/12px 'Liberation Serif', serif;color:#000;">30</div>
<div class="r" style="left:112px;top:290px;width:33px;height:16px;background:#fff;box-shadow:inset -1px -1px #c0c0c0;"></div>
<div class="t" style="left:112px;width:32px;text-align:center;top:291.95px;font:bold 12px/12px 'Liberation Serif', serif;color:#000;">348</div>
<div class="r" style="left:145px;top:290px;width:73px;height:16px;background:#ff0;box-shadow:inset -1px -1px #c0c0c0;"></div>
<div class="t" style="left:145px;width:72px;text-align:center;top:291.95px;font:bold 12px/12px 'Liberation Serif', serif;color:#000;">.00</div>
<div class="r" style="left:218px;top:290px;width:47px;height:16px;background:#fff;box-shadow:inset -1px -1px #c0c0c0;"></div>
<div class="t" style="left:218px;width:46px;text-align:center;top:291.95px;font:bold 12px/12px 'Liberation Serif', serif;color:#000;">6.0000</div>
<div class="r" style="left:265px;top:290px;width:73px;height:16px;background:#fff;box-shadow:inset -1px -1px #c0c0c0;"></div>
<div class="t" style="left:265px;width:72px;text-align:center;top:291.95px;font:bold 12px/12px 'Liberation Serif', serif;color:#000;">2,822.24</div>
<div class="r" style="left:338px;top:290px;width:73px;height:16px;background:#fff;box-shadow:inset -1px -1px #c0c0c0;"></div>
<div class="t" style="left:338px;width:72px;text-align:center;top:291.95px;font:bold 12px/12px 'Liberation Serif', serif;color:#000;">-2,822.24</div>
<div class="r" style="left:411px;top:290px;width:73px;height:16px;background:#fff;box-shadow:inset -1px -1px #c0c0c0;"></div>
<div class="t" style="left:411px;width:72px;text-align:center;top:291.95px;font:bold 12px/12px 'Liberation Serif', serif;color:#000;">567,269.72</div>
<div class="r" style="left:484px;top:290px;width:60px;height:16px;background:#fff;box-shadow:inset -1px -1px #c0c0c0;"></div>
<div class="t" style="left:484px;width:59px;text-align:center;top:291.95px;font:bold 12px/12px 'Liberation Serif', serif;color:#000;">.00</div>
<div class="r" style="left:544px;top:290px;width:73px;height:16px;background:#fff;box-shadow:inset -1px -1px #c0c0c0;"></div>
<div class="t" style="right:62.5px;text-align:right;top:291.95px;font:bold 12px/12px 'Liberation Serif', serif">467,269.72</div>
<div class="r" style="left:617px;top:290px;width:184px;height:16px;background:#fff;box-shadow:inset -1px -1px #c0c0c0;"></div>
<div class="r" style="left:6px;top:306px;width:73px;height:16px;background:#c0c0c0;box-shadow:inset 1px 1px #fff,inset -1px -1px #000;"></div>
<div class="t" style="left:6px;width:72px;text-align:center;top:307.95px;font:bold 12px/12px 'Liberation Serif', serif;color:#000;">08/27/2031</div>
<div class="r" style="left:79px;top:306px;width:33px;height:16px;background:#fff;box-shadow:inset -1px -1px #c0c0c0;"></div>
<div class="t" style="left:79px;width:32px;text-align:center;top:307.95px;font:bold 12px/12px 'Liberation Serif', serif;color:#000;">31</div>
<div class="r" style="left:112px;top:306px;width:33px;height:16px;background:#fff;box-shadow:inset -1px -1px #c0c0c0;"></div>
<div class="t" style="left:112px;width:32px;text-align:center;top:307.95px;font:bold 12px/12px 'Liberation Serif', serif;color:#000;">349</div>
<div class="r" style="left:145px;top:306px;width:73px;height:16px;background:#ff0;box-shadow:inset -1px -1px #c0c0c0;"></div>
<div class="t" style="left:145px;width:72px;text-align:center;top:307.95px;font:bold 12px/12px 'Liberation Serif', serif;color:#000;">.00</div>
<div class="r" style="left:218px;top:306px;width:47px;height:16px;background:#fff;box-shadow:inset -1px -1px #c0c0c0;"></div>
<div class="t" style="left:218px;width:46px;text-align:center;top:307.95px;font:bold 12px/12px 'Liberation Serif', serif;color:#000;">6.0000</div>
<div class="r" style="left:265px;top:306px;width:73px;height:16px;background:#fff;box-shadow:inset -1px -1px #c0c0c0;"></div>
<div class="t" style="left:265px;width:72px;text-align:center;top:307.95px;font:bold 12px/12px 'Liberation Serif', serif;color:#000;">2,836.35</div>
<div class="r" style="left:338px;top:306px;width:73px;height:16px;background:#fff;box-shadow:inset -1px -1px #c0c0c0;"></div>
<div class="t" style="left:338px;width:72px;text-align:center;top:307.95px;font:bold 12px/12px 'Liberation Serif', serif;color:#000;">-2,836.35</div>
<div class="r" style="left:411px;top:306px;width:73px;height:16px;background:#fff;box-shadow:inset -1px -1px #c0c0c0;"></div>
<div class="t" style="left:411px;width:72px;text-align:center;top:307.95px;font:bold 12px/12px 'Liberation Serif', serif;color:#000;">570,106.07</div>
<div class="r" style="left:484px;top:306px;width:60px;height:16px;background:#fff;box-shadow:inset -1px -1px #c0c0c0;"></div>
<div class="t" style="left:484px;width:59px;text-align:center;top:307.95px;font:bold 12px/12px 'Liberation Serif', serif;color:#000;">.00</div>
<div class="r" style="left:544px;top:306px;width:73px;height:16px;background:#fff;box-shadow:inset -1px -1px #c0c0c0;"></div>
<div class="t" style="right:62.5px;text-align:right;top:307.95px;font:bold 12px/12px 'Liberation Serif', serif">470,106.07</div>
<div class="r" style="left:617px;top:306px;width:184px;height:16px;background:#fff;box-shadow:inset -1px -1px #c0c0c0;"></div>
<div class="r" style="left:6px;top:322px;width:73px;height:16px;background:#c0c0c0;box-shadow:inset 1px 1px #fff,inset -1px -1px #000;"></div>
<div class="t" style="left:6px;width:72px;text-align:center;top:323.95px;font:bold 12px/12px 'Liberation Serif', serif;color:#000;">09/27/2031</div>
<div class="r" style="left:79px;top:322px;width:33px;height:16px;background:#fff;box-shadow:inset -1px -1px #c0c0c0;"></div>
<div class="t" style="left:79px;width:32px;text-align:center;top:323.95px;font:bold 12px/12px 'Liberation Serif', serif;color:#000;">31</div>
<div class="r" style="left:112px;top:322px;width:33px;height:16px;background:#fff;box-shadow:inset -1px -1px #c0c0c0;"></div>
<div class="t" style="left:112px;width:32px;text-align:center;top:323.95px;font:bold 12px/12px 'Liberation Serif', serif;color:#000;">350</div>
<div class="r" style="left:145px;top:322px;width:73px;height:16px;background:#ff0;box-shadow:inset -1px -1px #c0c0c0;"></div>
<div class="t" style="left:145px;width:72px;text-align:center;top:323.95px;font:bold 12px/12px 'Liberation Serif', serif;color:#000;">.00</div>
<div class="r" style="left:218px;top:322px;width:47px;height:16px;background:#fff;box-shadow:inset -1px -1px #c0c0c0;"></div>
<div class="t" style="left:218px;width:46px;text-align:center;top:323.95px;font:bold 12px/12px 'Liberation Serif', serif;color:#000;">6.0000</div>
<div class="r" style="left:265px;top:322px;width:73px;height:16px;background:#fff;box-shadow:inset -1px -1px #c0c0c0;"></div>
<div class="t" style="left:265px;width:72px;text-align:center;top:323.95px;font:bold 12px/12px 'Liberation Serif', serif;color:#000;">2,850.53</div>
<div class="r" style="left:338px;top:322px;width:73px;height:16px;background:#fff;box-shadow:inset -1px -1px #c0c0c0;"></div>
<div class="t" style="left:338px;width:72px;text-align:center;top:323.95px;font:bold 12px/12px 'Liberation Serif', serif;color:#000;">-2,850.53</div>
<div class="r" style="left:411px;top:322px;width:73px;height:16px;background:#fff;box-shadow:inset -1px -1px #c0c0c0;"></div>
<div class="t" style="left:411px;width:72px;text-align:center;top:323.95px;font:bold 12px/12px 'Liberation Serif', serif;color:#000;">572,956.60</div>
<div class="r" style="left:484px;top:322px;width:60px;height:16px;background:#fff;box-shadow:inset -1px -1px #c0c0c0;"></div>
<div class="t" style="left:484px;width:59px;text-align:center;top:323.95px;font:bold 12px/12px 'Liberation Serif', serif;color:#000;">.00</div>
<div class="r" style="left:544px;top:322px;width:73px;height:16px;background:#fff;box-shadow:inset -1px -1px #c0c0c0;"></div>
<div class="t" style="right:62.5px;text-align:right;top:323.95px;font:bold 12px/12px 'Liberation Serif', serif">472,956.60</div>
<div class="r" style="left:617px;top:322px;width:184px;height:16px;background:#fff;box-shadow:inset -1px -1px #c0c0c0;"></div>
<div class="r" style="left:6px;top:338px;width:73px;height:16px;background:#c0c0c0;box-shadow:inset 1px 1px #fff,inset -1px -1px #000;"></div>
<div class="t" style="left:6px;width:72px;text-align:center;top:339.95px;font:bold 12px/12px 'Liberation Serif', serif;color:#000;">10/27/2031</div>
<div class="r" style="left:79px;top:338px;width:33px;height:16px;background:#fff;box-shadow:inset -1px -1px #c0c0c0;"></div>
<div class="t" style="left:79px;width:32px;text-align:center;top:339.95px;font:bold 12px/12px 'Liberation Serif', serif;color:#000;">30</div>
<div class="r" style="left:112px;top:338px;width:33px;height:16px;background:#fff;box-shadow:inset -1px -1px #c0c0c0;"></div>
<div class="t" style="left:112px;width:32px;text-align:center;top:339.95px;font:bold 12px/12px 'Liberation Serif', serif;color:#000;">351</div>
<div class="r" style="left:145px;top:338px;width:73px;height:16px;background:#ff0;box-shadow:inset -1px -1px #c0c0c0;"></div>
<div class="t" style="left:145px;width:72px;text-align:center;top:339.95px;font:bold 12px/12px 'Liberation Serif', serif;color:#000;">.00</div>
<div class="r" style="left:218px;top:338px;width:47px;height:16px;background:#fff;box-shadow:inset -1px -1px #c0c0c0;"></div>
<div class="t" style="left:218px;width:46px;text-align:center;top:339.95px;font:bold 12px/12px 'Liberation Serif', serif;color:#000;">6.0000</div>
<div class="r" style="left:265px;top:338px;width:73px;height:16px;background:#fff;box-shadow:inset -1px -1px #c0c0c0;"></div>
<div class="t" style="left:265px;width:72px;text-align:center;top:339.95px;font:bold 12px/12px 'Liberation Serif', serif;color:#000;">2,864.78</div>
<div class="r" style="left:338px;top:338px;width:73px;height:16px;background:#fff;box-shadow:inset -1px -1px #c0c0c0;"></div>
<div class="t" style="left:338px;width:72px;text-align:center;top:339.95px;font:bold 12px/12px 'Liberation Serif', serif;color:#000;">-2,864.78</div>
<div class="r" style="left:411px;top:338px;width:73px;height:16px;background:#fff;box-shadow:inset -1px -1px #c0c0c0;"></div>
<div class="t" style="left:411px;width:72px;text-align:center;top:339.95px;font:bold 12px/12px 'Liberation Serif', serif;color:#000;">575,821.38</div>
<div class="r" style="left:484px;top:338px;width:60px;height:16px;background:#fff;box-shadow:inset -1px -1px #c0c0c0;"></div>
<div class="t" style="left:484px;width:59px;text-align:center;top:339.95px;font:bold 12px/12px 'Liberation Serif', serif;color:#000;">.00</div>
<div class="r" style="left:544px;top:338px;width:73px;height:16px;background:#fff;box-shadow:inset -1px -1px #c0c0c0;"></div>
<div class="t" style="right:62.5px;text-align:right;top:339.95px;font:bold 12px/12px 'Liberation Serif', serif">475,821.38</div>
<div class="r" style="left:617px;top:338px;width:184px;height:16px;background:#fff;box-shadow:inset -1px -1px #c0c0c0;"></div>
<div class="r" style="left:6px;top:354px;width:73px;height:16px;background:#c0c0c0;box-shadow:inset 1px 1px #fff,inset -1px -1px #000;"></div>
<div class="t" style="left:6px;width:72px;text-align:center;top:355.95px;font:bold 12px/12px 'Liberation Serif', serif;color:#000;">11/27/2031</div>
<div class="r" style="left:79px;top:354px;width:33px;height:16px;background:#fff;box-shadow:inset -1px -1px #c0c0c0;"></div>
<div class="t" style="left:79px;width:32px;text-align:center;top:355.95px;font:bold 12px/12px 'Liberation Serif', serif;color:#000;">31</div>
<div class="r" style="left:112px;top:354px;width:33px;height:16px;background:#fff;box-shadow:inset -1px -1px #c0c0c0;"></div>
<div class="t" style="left:112px;width:32px;text-align:center;top:355.95px;font:bold 12px/12px 'Liberation Serif', serif;color:#000;">352</div>
<div class="r" style="left:145px;top:354px;width:73px;height:16px;background:#ff0;box-shadow:inset -1px -1px #c0c0c0;"></div>
<div class="t" style="left:145px;width:72px;text-align:center;top:355.95px;font:bold 12px/12px 'Liberation Serif', serif;color:#000;">.00</div>
<div class="r" style="left:218px;top:354px;width:47px;height:16px;background:#fff;box-shadow:inset -1px -1px #c0c0c0;"></div>
<div class="t" style="left:218px;width:46px;text-align:center;top:355.95px;font:bold 12px/12px 'Liberation Serif', serif;color:#000;">6.0000</div>
<div class="r" style="left:265px;top:354px;width:73px;height:16px;background:#fff;box-shadow:inset -1px -1px #c0c0c0;"></div>
<div class="t" style="left:265px;width:72px;text-align:center;top:355.95px;font:bold 12px/12px 'Liberation Serif', serif;color:#000;">2,879.11</div>
<div class="r" style="left:338px;top:354px;width:73px;height:16px;background:#fff;box-shadow:inset -1px -1px #c0c0c0;"></div>
<div class="t" style="left:338px;width:72px;text-align:center;top:355.95px;font:bold 12px/12px 'Liberation Serif', serif;color:#000;">-2,879.11</div>
<div class="r" style="left:411px;top:354px;width:73px;height:16px;background:#fff;box-shadow:inset -1px -1px #c0c0c0;"></div>
<div class="t" style="left:411px;width:72px;text-align:center;top:355.95px;font:bold 12px/12px 'Liberation Serif', serif;color:#000;">578,700.49</div>
<div class="r" style="left:484px;top:354px;width:60px;height:16px;background:#fff;box-shadow:inset -1px -1px #c0c0c0;"></div>
<div class="t" style="left:484px;width:59px;text-align:center;top:355.95px;font:bold 12px/12px 'Liberation Serif', serif;color:#000;">.00</div>
<div class="r" style="left:544px;top:354px;width:73px;height:16px;background:#fff;box-shadow:inset -1px -1px #c0c0c0;"></div>
<div class="t" style="right:62.5px;text-align:right;top:355.95px;font:bold 12px/12px 'Liberation Serif', serif">478,700.49</div>
<div class="r" style="left:617px;top:354px;width:184px;height:16px;background:#fff;box-shadow:inset -1px -1px #c0c0c0;"></div>
<div class="r" style="left:6px;top:370px;width:73px;height:16px;background:#c0c0c0;box-shadow:inset 1px 1px #fff,inset -1px -1px #000;"></div>
<div class="t" style="left:6px;width:72px;text-align:center;top:371.95px;font:bold 12px/12px 'Liberation Serif', serif;color:#000;">12/27/2031</div>
<div class="r" style="left:79px;top:370px;width:33px;height:16px;background:#fff;box-shadow:inset -1px -1px #c0c0c0;"></div>
<div class="t" style="left:79px;width:32px;text-align:center;top:371.95px;font:bold 12px/12px 'Liberation Serif', serif;color:#000;">30</div>
<div class="r" style="left:112px;top:370px;width:33px;height:16px;background:#fff;box-shadow:inset -1px -1px #c0c0c0;"></div>
<div class="t" style="left:112px;width:32px;text-align:center;top:371.95px;font:bold 12px/12px 'Liberation Serif', serif;color:#000;">353</div>
<div class="r" style="left:145px;top:370px;width:73px;height:16px;background:#ff0;box-shadow:inset -1px -1px #c0c0c0;"></div>
<div class="t" style="left:145px;width:72px;text-align:center;top:371.95px;font:bold 12px/12px 'Liberation Serif', serif;color:#000;">.00</div>
<div class="r" style="left:218px;top:370px;width:47px;height:16px;background:#fff;box-shadow:inset -1px -1px #c0c0c0;"></div>
<div class="t" style="left:218px;width:46px;text-align:center;top:371.95px;font:bold 12px/12px 'Liberation Serif', serif;color:#000;">6.0000</div>
<div class="r" style="left:265px;top:370px;width:73px;height:16px;background:#fff;box-shadow:inset -1px -1px #c0c0c0;"></div>
<div class="t" style="left:265px;width:72px;text-align:center;top:371.95px;font:bold 12px/12px 'Liberation Serif', serif;color:#000;">2,893.50</div>
<div class="r" style="left:338px;top:370px;width:73px;height:16px;background:#fff;box-shadow:inset -1px -1px #c0c0c0;"></div>
<div class="t" style="left:338px;width:72px;text-align:center;top:371.95px;font:bold 12px/12px 'Liberation Serif', serif;color:#000;">-2,893.50</div>
<div class="r" style="left:411px;top:370px;width:73px;height:16px;background:#fff;box-shadow:inset -1px -1px #c0c0c0;"></div>
<div class="t" style="left:411px;width:72px;text-align:center;top:371.95px;font:bold 12px/12px 'Liberation Serif', serif;color:#000;">581,593.99</div>
<div class="r" style="left:484px;top:370px;width:60px;height:16px;background:#fff;box-shadow:inset -1px -1px #c0c0c0;"></div>
<div class="t" style="left:484px;width:59px;text-align:center;top:371.95px;font:bold 12px/12px 'Liberation Serif', serif;color:#000;">.00</div>
<div class="r" style="left:544px;top:370px;width:73px;height:16px;background:#fff;box-shadow:inset -1px -1px #c0c0c0;"></div>
<div class="t" style="right:62.5px;text-align:right;top:371.95px;font:bold 12px/12px 'Liberation Serif', serif">481,593.99</div>
<div class="r" style="left:617px;top:370px;width:184px;height:16px;background:#fff;box-shadow:inset -1px -1px #c0c0c0;"></div>
<div class="r" style="left:6px;top:386px;width:73px;height:16px;background:#c0c0c0;box-shadow:inset 1px 1px #fff,inset -1px -1px #000;"></div>
<div class="t" style="left:6px;width:72px;text-align:center;top:387.95px;font:bold 12px/12px 'Liberation Serif', serif;color:#000;">01/27/2032</div>
<div class="r" style="left:79px;top:386px;width:33px;height:16px;background:#fff;box-shadow:inset -1px -1px #c0c0c0;"></div>
<div class="t" style="left:79px;width:32px;text-align:center;top:387.95px;font:bold 12px/12px 'Liberation Serif', serif;color:#000;">31</div>
<div class="r" style="left:112px;top:386px;width:33px;height:16px;background:#fff;box-shadow:inset -1px -1px #c0c0c0;"></div>
<div class="t" style="left:112px;width:32px;text-align:center;top:387.95px;font:bold 12px/12px 'Liberation Serif', serif;color:#000;">354</div>
<div class="r" style="left:145px;top:386px;width:73px;height:16px;background:#ff0;box-shadow:inset -1px -1px #c0c0c0;"></div>
<div class="t" style="left:145px;width:72px;text-align:center;top:387.95px;font:bold 12px/12px 'Liberation Serif', serif;color:#000;">.00</div>
<div class="r" style="left:218px;top:386px;width:47px;height:16px;background:#fff;box-shadow:inset -1px -1px #c0c0c0;"></div>
<div class="t" style="left:218px;width:46px;text-align:center;top:387.95px;font:bold 12px/12px 'Liberation Serif', serif;color:#000;">6.0000</div>
<div class="r" style="left:265px;top:386px;width:73px;height:16px;background:#fff;box-shadow:inset -1px -1px #c0c0c0;"></div>
<div class="t" style="left:265px;width:72px;text-align:center;top:387.95px;font:bold 12px/12px 'Liberation Serif', serif;color:#000;">2,907.97</div>
<div class="r" style="left:338px;top:386px;width:73px;height:16px;background:#fff;box-shadow:inset -1px -1px #c0c0c0;"></div>
<div class="t" style="left:338px;width:72px;text-align:center;top:387.95px;font:bold 12px/12px 'Liberation Serif', serif;color:#000;">-2,907.97</div>
<div class="r" style="left:411px;top:386px;width:73px;height:16px;background:#fff;box-shadow:inset -1px -1px #c0c0c0;"></div>
<div class="t" style="left:411px;width:72px;text-align:center;top:387.95px;font:bold 12px/12px 'Liberation Serif', serif;color:#000;">584,501.96</div>
<div class="r" style="left:484px;top:386px;width:60px;height:16px;background:#fff;box-shadow:inset -1px -1px #c0c0c0;"></div>
<div class="t" style="left:484px;width:59px;text-align:center;top:387.95px;font:bold 12px/12px 'Liberation Serif', serif;color:#000;">.00</div>
<div class="r" style="left:544px;top:386px;width:73px;height:16px;background:#fff;box-shadow:inset -1px -1px #c0c0c0;"></div>
<div class="t" style="right:62.5px;text-align:right;top:387.95px;font:bold 12px/12px 'Liberation Serif', serif">484,501.96</div>
<div class="r" style="left:617px;top:386px;width:184px;height:16px;background:#fff;box-shadow:inset -1px -1px #c0c0c0;"></div>
<div class="r" style="left:6px;top:402px;width:73px;height:16px;background:#c0c0c0;box-shadow:inset 1px 1px #fff,inset -1px -1px #000;"></div>
<div class="t" style="left:6px;width:72px;text-align:center;top:403.95px;font:bold 12px/12px 'Liberation Serif', serif;color:#000;">02/27/2032</div>
<div class="r" style="left:79px;top:402px;width:33px;height:16px;background:#fff;box-shadow:inset -1px -1px #c0c0c0;"></div>
<div class="t" style="left:79px;width:32px;text-align:center;top:403.95px;font:bold 12px/12px 'Liberation Serif', serif;color:#000;">31</div>
<div class="r" style="left:112px;top:402px;width:33px;height:16px;background:#fff;box-shadow:inset -1px -1px #c0c0c0;"></div>
<div class="t" style="left:112px;width:32px;text-align:center;top:403.95px;font:bold 12px/12px 'Liberation Serif', serif;color:#000;">355</div>
<div class="r" style="left:145px;top:402px;width:73px;height:16px;background:#ff0;box-shadow:inset -1px -1px #c0c0c0;"></div>
<div class="t" style="left:145px;width:72px;text-align:center;top:403.95px;font:bold 12px/12px 'Liberation Serif', serif;color:#000;">.00</div>
<div class="r" style="left:218px;top:402px;width:47px;height:16px;background:#fff;box-shadow:inset -1px -1px #c0c0c0;"></div>
<div class="t" style="left:218px;width:46px;text-align:center;top:403.95px;font:bold 12px/12px 'Liberation Serif', serif;color:#000;">6.0000</div>
<div class="r" style="left:265px;top:402px;width:73px;height:16px;background:#fff;box-shadow:inset -1px -1px #c0c0c0;"></div>
<div class="t" style="left:265px;width:72px;text-align:center;top:403.95px;font:bold 12px/12px 'Liberation Serif', serif;color:#000;">2,922.51</div>
<div class="r" style="left:338px;top:402px;width:73px;height:16px;background:#fff;box-shadow:inset -1px -1px #c0c0c0;"></div>
<div class="t" style="left:338px;width:72px;text-align:center;top:403.95px;font:bold 12px/12px 'Liberation Serif', serif;color:#000;">-2,922.51</div>
<div class="r" style="left:411px;top:402px;width:73px;height:16px;background:#fff;box-shadow:inset -1px -1px #c0c0c0;"></div>
<div class="t" style="left:411px;width:72px;text-align:center;top:403.95px;font:bold 12px/12px 'Liberation Serif', serif;color:#000;">587,424.47</div>
<div class="r" style="left:484px;top:402px;width:60px;height:16px;background:#fff;box-shadow:inset -1px -1px #c0c0c0;"></div>
<div class="t" style="left:484px;width:59px;text-align:center;top:403.95px;font:bold 12px/12px 'Liberation Serif', serif;color:#000;">.00</div>
<div class="r" style="left:544px;top:402px;width:73px;height:16px;background:#fff;box-shadow:inset -1px -1px #c0c0c0;"></div>
<div class="t" style="right:62.5px;text-align:right;top:403.95px;font:bold 12px/12px 'Liberation Serif', serif">487,424.47</div>
<div class="r" style="left:617px;top:402px;width:184px;height:16px;background:#fff;box-shadow:inset -1px -1px #c0c0c0;"></div>
<div class="r" style="left:6px;top:418px;width:73px;height:16px;background:#c0c0c0;box-shadow:inset 1px 1px #fff,inset -1px -1px #000;"></div>
<div class="t" style="left:6px;width:72px;text-align:center;top:419.95px;font:bold 12px/12px 'Liberation Serif', serif;color:#000;">03/27/2032</div>
<div class="r" style="left:79px;top:418px;width:33px;height:16px;background:#fff;box-shadow:inset -1px -1px #c0c0c0;"></div>
<div class="t" style="left:79px;width:32px;text-align:center;top:419.95px;font:bold 12px/12px 'Liberation Serif', serif;color:#000;">29</div>
<div class="r" style="left:112px;top:418px;width:33px;height:16px;background:#fff;box-shadow:inset -1px -1px #c0c0c0;"></div>
<div class="t" style="left:112px;width:32px;text-align:center;top:419.95px;font:bold 12px/12px 'Liberation Serif', serif;color:#000;">356</div>
<div class="r" style="left:145px;top:418px;width:73px;height:16px;background:#ff0;box-shadow:inset -1px -1px #c0c0c0;"></div>
<div class="t" style="left:145px;width:72px;text-align:center;top:419.95px;font:bold 12px/12px 'Liberation Serif', serif;color:#000;">.00</div>
<div class="r" style="left:218px;top:418px;width:47px;height:16px;background:#fff;box-shadow:inset -1px -1px #c0c0c0;"></div>
<div class="t" style="left:218px;width:46px;text-align:center;top:419.95px;font:bold 12px/12px 'Liberation Serif', serif;color:#000;">6.0000</div>
<div class="r" style="left:265px;top:418px;width:73px;height:16px;background:#fff;box-shadow:inset -1px -1px #c0c0c0;"></div>
<div class="t" style="left:265px;width:72px;text-align:center;top:419.95px;font:bold 12px/12px 'Liberation Serif', serif;color:#000;">2,937.12</div>
<div class="r" style="left:338px;top:418px;width:73px;height:16px;background:#fff;box-shadow:inset -1px -1px #c0c0c0;"></div>
<div class="t" style="left:338px;width:72px;text-align:center;top:419.95px;font:bold 12px/12px 'Liberation Serif', serif;color:#000;">-2,937.12</div>
<div class="r" style="left:411px;top:418px;width:73px;height:16px;background:#fff;box-shadow:inset -1px -1px #c0c0c0;"></div>
<div class="t" style="left:411px;width:72px;text-align:center;top:419.95px;font:bold 12px/12px 'Liberation Serif', serif;color:#000;">590,361.59</div>
<div class="r" style="left:484px;top:418px;width:60px;height:16px;background:#fff;box-shadow:inset -1px -1px #c0c0c0;"></div>
<div class="t" style="left:484px;width:59px;text-align:center;top:419.95px;font:bold 12px/12px 'Liberation Serif', serif;color:#000;">.00</div>
<div class="r" style="left:544px;top:418px;width:73px;height:16px;background:#fff;box-shadow:inset -1px -1px #c0c0c0;"></div>
<div class="t" style="right:62.5px;text-align:right;top:419.95px;font:bold 12px/12px 'Liberation Serif', serif">490,361.59</div>
<div class="r" style="left:617px;top:418px;width:184px;height:16px;background:#fff;box-shadow:inset -1px -1px #c0c0c0;"></div>
<div class="r" style="left:6px;top:434px;width:73px;height:16px;background:#c0c0c0;box-shadow:inset 1px 1px #fff,inset -1px -1px #000;"></div>
<div class="t" style="left:6px;width:72px;text-align:center;top:435.95px;font:bold 12px/12px 'Liberation Serif', serif;color:#000;">04/27/2032</div>
<div class="r" style="left:79px;top:434px;width:33px;height:16px;background:#fff;box-shadow:inset -1px -1px #c0c0c0;"></div>
<div class="t" style="left:79px;width:32px;text-align:center;top:435.95px;font:bold 12px/12px 'Liberation Serif', serif;color:#000;">31</div>
<div class="r" style="left:112px;top:434px;width:33px;height:16px;background:#fff;box-shadow:inset -1px -1px #c0c0c0;"></div>
<div class="t" style="left:112px;width:32px;text-align:center;top:435.95px;font:bold 12px/12px 'Liberation Serif', serif;color:#000;">357</div>
<div class="r" style="left:145px;top:434px;width:73px;height:16px;background:#ff0;box-shadow:inset -1px -1px #c0c0c0;"></div>
<div class="t" style="left:145px;width:72px;text-align:center;top:435.95px;font:bold 12px/12px 'Liberation Serif', serif;color:#000;">.00</div>
<div class="r" style="left:218px;top:434px;width:47px;height:16px;background:#fff;box-shadow:inset -1px -1px #c0c0c0;"></div>
<div class="t" style="left:218px;width:46px;text-align:center;top:435.95px;font:bold 12px/12px 'Liberation Serif', serif;color:#000;">6.0000</div>
<div class="r" style="left:265px;top:434px;width:73px;height:16px;background:#fff;box-shadow:inset -1px -1px #c0c0c0;"></div>
<div class="t" style="left:265px;width:72px;text-align:center;top:435.95px;font:bold 12px/12px 'Liberation Serif', serif;color:#000;">2,951.81</div>
<div class="r" style="left:338px;top:434px;width:73px;height:16px;background:#fff;box-shadow:inset -1px -1px #c0c0c0;"></div>
<div class="t" style="left:338px;width:72px;text-align:center;top:435.95px;font:bold 12px/12px 'Liberation Serif', serif;color:#000;">-2,951.81</div>
<div class="r" style="left:411px;top:434px;width:73px;height:16px;background:#fff;box-shadow:inset -1px -1px #c0c0c0;"></div>
<div class="t" style="left:411px;width:72px;text-align:center;top:435.95px;font:bold 12px/12px 'Liberation Serif', serif;color:#000;">593,313.40</div>
<div class="r" style="left:484px;top:434px;width:60px;height:16px;background:#fff;box-shadow:inset -1px -1px #c0c0c0;"></div>
<div class="t" style="left:484px;width:59px;text-align:center;top:435.95px;font:bold 12px/12px 'Liberation Serif', serif;color:#000;">.00</div>
<div class="r" style="left:544px;top:434px;width:73px;height:16px;background:#fff;box-shadow:inset -1px -1px #c0c0c0;"></div>
<div class="t" style="right:62.5px;text-align:right;top:435.95px;font:bold 12px/12px 'Liberation Serif', serif">493,313.40</div>
<div class="r" style="left:617px;top:434px;width:184px;height:16px;background:#fff;box-shadow:inset -1px -1px #c0c0c0;"></div>
<div class="r" style="left:6px;top:450px;width:73px;height:16px;background:#c0c0c0;box-shadow:inset 1px 1px #fff,inset -1px -1px #000;"></div>
<div class="t" style="left:6px;width:72px;text-align:center;top:451.95px;font:bold 12px/12px 'Liberation Serif', serif;color:#000;">05/27/2032</div>
<div class="r" style="left:79px;top:450px;width:33px;height:16px;background:#fff;box-shadow:inset -1px -1px #c0c0c0;"></div>
<div class="t" style="left:79px;width:32px;text-align:center;top:451.95px;font:bold 12px/12px 'Liberation Serif', serif;color:#000;">30</div>
<div class="r" style="left:112px;top:450px;width:33px;height:16px;background:#fff;box-shadow:inset -1px -1px #c0c0c0;"></div>
<div class="t" style="left:112px;width:32px;text-align:center;top:451.95px;font:bold 12px/12px 'Liberation Serif', serif;color:#000;">358</div>
<div class="r" style="left:145px;top:450px;width:73px;height:16px;background:#ff0;box-shadow:inset -1px -1px #c0c0c0;"></div>
<div class="t" style="left:145px;width:72px;text-align:center;top:451.95px;font:bold 12px/12px 'Liberation Serif', serif;color:#000;">.00</div>
<div class="r" style="left:218px;top:450px;width:47px;height:16px;background:#fff;box-shadow:inset -1px -1px #c0c0c0;"></div>
<div class="t" style="left:218px;width:46px;text-align:center;top:451.95px;font:bold 12px/12px 'Liberation Serif', serif;color:#000;">6.0000</div>
<div class="r" style="left:265px;top:450px;width:73px;height:16px;background:#fff;box-shadow:inset -1px -1px #c0c0c0;"></div>
<div class="t" style="left:265px;width:72px;text-align:center;top:451.95px;font:bold 12px/12px 'Liberation Serif', serif;color:#000;">2,966.57</div>
<div class="r" style="left:338px;top:450px;width:73px;height:16px;background:#fff;box-shadow:inset -1px -1px #c0c0c0;"></div>
<div class="t" style="left:338px;width:72px;text-align:center;top:451.95px;font:bold 12px/12px 'Liberation Serif', serif;color:#000;">-2,966.57</div>
<div class="r" style="left:411px;top:450px;width:73px;height:16px;background:#fff;box-shadow:inset -1px -1px #c0c0c0;"></div>
<div class="t" style="left:411px;width:72px;text-align:center;top:451.95px;font:bold 12px/12px 'Liberation Serif', serif;color:#000;">596,279.97</div>
<div class="r" style="left:484px;top:450px;width:60px;height:16px;background:#fff;box-shadow:inset -1px -1px #c0c0c0;"></div>
<div class="t" style="left:484px;width:59px;text-align:center;top:451.95px;font:bold 12px/12px 'Liberation Serif', serif;color:#000;">.00</div>
<div class="r" style="left:544px;top:450px;width:73px;height:16px;background:#fff;box-shadow:inset -1px -1px #c0c0c0;"></div>
<div class="t" style="right:62.5px;text-align:right;top:451.95px;font:bold 12px/12px 'Liberation Serif', serif">496,279.97</div>
<div class="r" style="left:617px;top:450px;width:184px;height:16px;background:#fff;box-shadow:inset -1px -1px #c0c0c0;"></div>
<div class="r" style="left:6px;top:466px;width:73px;height:16px;background:#c0c0c0;box-shadow:inset 1px 1px #fff,inset -1px -1px #000;"></div>
<div class="t" style="left:6px;width:72px;text-align:center;top:467.95px;font:bold 12px/12px 'Liberation Serif', serif;color:#000;">06/27/2032</div>
<div class="r" style="left:79px;top:466px;width:33px;height:16px;background:#fff;box-shadow:inset -1px -1px #c0c0c0;"></div>
<div class="t" style="left:79px;width:32px;text-align:center;top:467.95px;font:bold 12px/12px 'Liberation Serif', serif;color:#000;">31</div>
<div class="r" style="left:112px;top:466px;width:33px;height:16px;background:#fff;box-shadow:inset -1px -1px #c0c0c0;"></div>
<div class="t" style="left:112px;width:32px;text-align:center;top:467.95px;font:bold 12px/12px 'Liberation Serif', serif;color:#000;">359</div>
<div class="r" style="left:145px;top:466px;width:73px;height:16px;background:#ff0;box-shadow:inset -1px -1px #c0c0c0;"></div>
<div class="t" style="left:145px;width:72px;text-align:center;top:467.95px;font:bold 12px/12px 'Liberation Serif', serif;color:#000;">.00</div>
<div class="r" style="left:218px;top:466px;width:47px;height:16px;background:#fff;box-shadow:inset -1px -1px #c0c0c0;"></div>
<div class="t" style="left:218px;width:46px;text-align:center;top:467.95px;font:bold 12px/12px 'Liberation Serif', serif;color:#000;">6.0000</div>
<div class="r" style="left:265px;top:466px;width:73px;height:16px;background:#fff;box-shadow:inset -1px -1px #c0c0c0;"></div>
<div class="t" style="left:265px;width:72px;text-align:center;top:467.95px;font:bold 12px/12px 'Liberation Serif', serif;color:#000;">2,981.40</div>
<div class="r" style="left:338px;top:466px;width:73px;height:16px;background:#fff;box-shadow:inset -1px -1px #c0c0c0;"></div>
<div class="t" style="left:338px;width:72px;text-align:center;top:467.95px;font:bold 12px/12px 'Liberation Serif', serif;color:#000;">-2,981.40</div>
<div class="r" style="left:411px;top:466px;width:73px;height:16px;background:#fff;box-shadow:inset -1px -1px #c0c0c0;"></div>
<div class="t" style="left:411px;width:72px;text-align:center;top:467.95px;font:bold 12px/12px 'Liberation Serif', serif;color:#000;">599,261.37</div>
<div class="r" style="left:484px;top:466px;width:60px;height:16px;background:#fff;box-shadow:inset -1px -1px #c0c0c0;"></div>
<div class="t" style="left:484px;width:59px;text-align:center;top:467.95px;font:bold 12px/12px 'Liberation Serif', serif;color:#000;">.00</div>
<div class="r" style="left:544px;top:466px;width:73px;height:16px;background:#fff;box-shadow:inset -1px -1px #c0c0c0;"></div>
<div class="t" style="right:62.5px;text-align:right;top:467.95px;font:bold 12px/12px 'Liberation Serif', serif">499,261.37</div>
<div class="r" style="left:617px;top:466px;width:184px;height:16px;background:#fff;box-shadow:inset -1px -1px #c0c0c0;"></div>
<div class="r" style="left:6px;top:482px;width:73px;height:16px;background:#c0c0c0;box-shadow:inset 1px 1px #fff,inset -1px -1px #000;"></div>
<div class="t" style="left:6px;width:72px;text-align:center;top:483.95px;font:bold 12px/12px 'Liberation Serif', serif;color:#000;">07/27/2032</div>
<div class="r" style="left:79px;top:482px;width:33px;height:16px;background:#fff;box-shadow:inset -1px -1px #c0c0c0;"></div>
<div class="t" style="left:79px;width:32px;text-align:center;top:483.95px;font:bold 12px/12px 'Liberation Serif', serif;color:#000;">30</div>
<div class="r" style="left:112px;top:482px;width:33px;height:16px;background:#fff;box-shadow:inset -1px -1px #c0c0c0;"></div>
<div class="t" style="left:112px;width:32px;text-align:center;top:483.95px;font:bold 12px/12px 'Liberation Serif', serif;color:#000;">360</div>
<div class="r" style="left:145px;top:482px;width:73px;height:16px;background:#ff0;box-shadow:inset -1px -1px #c0c0c0;"></div>
<div class="t" style="left:145px;width:72px;text-align:center;top:483.95px;font:bold 12px/12px 'Liberation Serif', serif;color:#000;">.00</div>
<div class="r" style="left:218px;top:482px;width:47px;height:16px;background:#ff0;box-shadow:inset -1px -1px #c0c0c0;"></div>
<div class="t" style="left:218px;width:46px;text-align:center;top:483.95px;font:bold 12px/12px 'Liberation Serif', serif;color:#000;">6.0000</div>
<div class="r" style="left:265px;top:482px;width:73px;height:16px;background:#ff0;box-shadow:inset -1px -1px #c0c0c0;"></div>
<div class="t" style="left:265px;width:72px;text-align:center;top:483.95px;font:bold 12px/12px 'Liberation Serif', serif;color:#000;">2,996.31</div>
<div class="r" style="left:338px;top:482px;width:73px;height:16px;background:#ff0;box-shadow:inset -1px -1px #c0c0c0;"></div>
<div class="t" style="left:338px;width:72px;text-align:center;top:483.95px;font:bold 12px/12px 'Liberation Serif', serif;color:#000;">-2,996.31</div>
<div class="r" style="left:411px;top:482px;width:73px;height:16px;background:#ff0;box-shadow:inset -1px -1px #c0c0c0;"></div>
<div class="t" style="left:411px;width:72px;text-align:center;top:483.95px;font:bold 12px/12px 'Liberation Serif', serif;color:#000;">602,257.68</div>
<div class="r" style="left:484px;top:482px;width:60px;height:16px;background:#ff0;box-shadow:inset -1px -1px #c0c0c0;"></div>
<div class="t" style="left:484px;width:59px;text-align:center;top:483.95px;font:bold 12px/12px 'Liberation Serif', serif;color:#000;">.00</div>
<div class="r" style="left:544px;top:482px;width:73px;height:16px;background:#ff0;box-shadow:inset -1px -1px #c0c0c0;"></div>
<div class="t" style="right:62.5px;text-align:right;top:483.95px;font:bold 12px/12px 'Liberation Serif', serif">502,257.68</div>
<div class="r" style="left:617px;top:482px;width:184px;height:16px;background:#fff;box-shadow:inset -1px -1px #c0c0c0;"></div>
<div class="r" style="left:6px;top:498px;width:73px;height:16px;background:#c0c0c0;box-shadow:inset 1px 1px #fff,inset -1px -1px #000;"></div>
<div class="t" style="left:6px;width:72px;text-align:center;top:499.95px;font:bold 12px/12px 'Liberation Serif', serif;color:#000;">08/27/2032</div>
<div class="r" style="left:79px;top:498px;width:33px;height:16px;background:#fff;box-shadow:inset -1px -1px #c0c0c0;"></div>
<div class="t" style="left:79px;width:32px;text-align:center;top:499.95px;font:bold 12px/12px 'Liberation Serif', serif;color:#000;">31</div>
<div class="r" style="left:112px;top:498px;width:33px;height:16px;background:#fff;box-shadow:inset -1px -1px #c0c0c0;"></div>
<div class="t" style="left:112px;width:32px;text-align:center;top:499.95px;font:bold 12px/12px 'Liberation Serif', serif;color:#000;">361</div>
<div class="r" style="left:145px;top:498px;width:73px;height:16px;background:#fff;box-shadow:inset -1px -1px #c0c0c0;"></div>
<div class="t" style="left:145px;width:72px;text-align:center;top:499.95px;font:bold 12px/12px 'Liberation Serif', serif;color:#000;">599.55</div>
<div class="r" style="left:218px;top:498px;width:47px;height:16px;background:#fff;box-shadow:inset -1px -1px #c0c0c0;"></div>
<div class="t" style="left:218px;width:46px;text-align:center;top:499.95px;font:bold 12px/12px 'Liberation Serif', serif;color:#000;">6.0000</div>
<div class="r" style="left:265px;top:498px;width:73px;height:16px;background:#fff;box-shadow:inset -1px -1px #c0c0c0;"></div>
<div class="t" style="left:265px;width:72px;text-align:center;top:499.95px;font:bold 12px/12px 'Liberation Serif', serif;color:#000;">3,011.29</div>
<div class="r" style="left:338px;top:498px;width:73px;height:16px;background:#fff;box-shadow:inset -1px -1px #c0c0c0;"></div>
<div class="t" style="left:338px;width:72px;text-align:center;top:499.95px;font:bold 12px/12px 'Liberation Serif', serif;color:#000;">-2,411.74</div>
<div class="r" style="left:411px;top:498px;width:73px;height:16px;background:#fff;box-shadow:inset -1px -1px #c0c0c0;"></div>
<div class="t" style="left:411px;width:72px;text-align:center;top:499.95px;font:bold 12px/12px 'Liberation Serif', serif;color:#000;">604,669.42</div>
<div class="r" style="left:484px;top:498px;width:60px;height:16px;background:#fff;box-shadow:inset -1px -1px #c0c0c0;"></div>
<div class="t" style="left:484px;width:59px;text-align:center;top:499.95px;font:bold 12px/12px 'Liberation Serif', serif;color:#000;">.00</div>
<div class="r" style="left:544px;top:498px;width:73px;height:16px;background:#fff;box-shadow:inset -1px -1px #c0c0c0;"></div>
<div class="t" style="right:62.5px;text-align:right;top:499.95px;font:bold 12px/12px 'Liberation Serif', serif">505,268.97</div>
<div class="r" style="left:617px;top:498px;width:184px;height:16px;background:#fff;box-shadow:inset -1px -1px #c0c0c0;"></div>
<div class="r" style="left:6px;top:514px;width:73px;height:16px;background:#c0c0c0;box-shadow:inset 1px 1px #fff,inset -1px -1px #000;"></div>
<div class="t" style="left:6px;width:72px;text-align:center;top:515.95px;font:bold 12px/12px 'Liberation Serif', serif;color:#000;"></div>
<div class="r" style="left:79px;top:514px;width:33px;height:16px;background:#fff;box-shadow:inset -1px -1px #c0c0c0;"></div>
<div class="t" style="left:79px;width:32px;text-align:center;top:515.95px;font:bold 12px/12px 'Liberation Serif', serif;color:#000;"></div>
<div class="r" style="left:112px;top:514px;width:33px;height:16px;background:#fff;box-shadow:inset -1px -1px #c0c0c0;"></div>
<div class="t" style="left:112px;width:32px;text-align:center;top:515.95px;font:bold 12px/12px 'Liberation Serif', serif;color:#000;"></div>
<div class="r" style="left:145px;top:514px;width:73px;height:16px;background:#fff;box-shadow:inset -1px -1px #c0c0c0;"></div>
<div class="t" style="left:145px;width:72px;text-align:center;top:515.95px;font:bold 12px/12px 'Liberation Serif', serif;color:#000;"></div>
<div class="r" style="left:218px;top:514px;width:47px;height:16px;background:#fff;box-shadow:inset -1px -1px #c0c0c0;"></div>
<div class="t" style="left:218px;width:46px;text-align:center;top:515.95px;font:bold 12px/12px 'Liberation Serif', serif;color:#000;"></div>
<div class="r" style="left:265px;top:514px;width:73px;height:16px;background:#fff;box-shadow:inset -1px -1px #c0c0c0;"></div>
<div class="t" style="left:265px;width:72px;text-align:center;top:515.95px;font:bold 12px/12px 'Liberation Serif', serif;color:#000;"></div>
<div class="r" style="left:338px;top:514px;width:73px;height:16px;background:#fff;box-shadow:inset -1px -1px #c0c0c0;"></div>
<div class="t" style="left:338px;width:72px;text-align:center;top:515.95px;font:bold 12px/12px 'Liberation Serif', serif;color:#000;"></div>
<div class="r" style="left:411px;top:514px;width:73px;height:16px;background:#fff;box-shadow:inset -1px -1px #c0c0c0;"></div>
<div class="t" style="left:411px;width:72px;text-align:center;top:515.95px;font:bold 12px/12px 'Liberation Serif', serif;color:#000;"></div>
<div class="r" style="left:484px;top:514px;width:60px;height:16px;background:#fff;box-shadow:inset -1px -1px #c0c0c0;"></div>
<div class="t" style="left:484px;width:59px;text-align:center;top:515.95px;font:bold 12px/12px 'Liberation Serif', serif;color:#000;"></div>
<div class="r" style="left:544px;top:514px;width:73px;height:16px;background:#fff;box-shadow:inset -1px -1px #c0c0c0;"></div>
<div class="t" style="right:62.5px;text-align:right;top:515.95px;font:bold 12px/12px 'Liberation Serif', serif"></div>
<div class="r" style="left:617px;top:514px;width:184px;height:16px;background:#fff;box-shadow:inset -1px -1px #c0c0c0;"></div>
<div class="r" style="left:272px;top:296px;width:389px;height:141px;background:#c0c0c0;box-shadow:inset 1px 1px #dfdfdf,inset -1px -1px #000,inset 2px 2px #fff,inset -2px -2px #808080;"></div>
<div class="r" style="left:276px;top:300px;width:381px;height:18px;background:linear-gradient(90deg,#000080,#1084d0)"></div>
<div id="dtitle" class="t" style="left:297px;top:302.84px;font:bold 12px/12px 'Liberation Sans', sans-serif;color:#fff">Present Value Future Value Calculator</div>
<svg class="r" style="left:277px;top:300px" width="20" height="18" shape-rendering="crispEdges">
<path d="M3 4h3v1h4v1h3v9h-3v-1h-4v-1h-3z" fill="#000"/><path d="M4 6h2v1h4v1h2v6h-2v-1h-4v-1h-2z" fill="#fff"/>
<rect x="4" y="5" width="2" height="1" fill="#10b0e8"/><rect x="6" y="6" width="4" height="1" fill="#10b0e8"/><rect x="10" y="7" width="2" height="1" fill="#10b0e8"/>
<path d="M13 11h1v1h1v1h-2z" fill="#a0a088"/></svg>
<div class="r" style="left:605px;top:302px;width:16px;height:14px;box-shadow:inset -1px -1px #000,inset 1px 1px #dfdfdf,inset -2px -2px #808080,inset 2px 2px #fff;background:#c0c0c0;"></div>
<div class="r" style="left:621px;top:302px;width:16px;height:14px;box-shadow:inset -1px -1px #000,inset 1px 1px #dfdfdf,inset -2px -2px #808080,inset 2px 2px #fff;background:#c0c0c0;"></div>
<div class="r" style="left:639px;top:302px;width:16px;height:14px;box-shadow:inset -1px -1px #000,inset 1px 1px #dfdfdf,inset -2px -2px #808080,inset 2px 2px #fff;background:#c0c0c0;"></div>
<div class="r" style="left:609px;top:311px;width:6px;height:2px;background:#000;"></div>
<div class="r" style="left:624px;top:304px;width:9px;height:9px;border:1px solid #000;border-top-width:2px;box-sizing:border-box;"></div>
<svg class="r" style="left:643px;top:305px" width="8" height="7" viewBox="0 0 8 7"><path d="M0 0l8 7M8 0l-8 7" stroke="#000" stroke-width="1.5"/></svg>
<div class="t" style="right:273px;text-align:right;top:328.84px;font:normal 12px/12px 'Liberation Sans', sans-serif;color:#000;transform:scaleX(0.893);transform-origin:100% 50%;">Present Value =</div>
<div class="r" style="left:407px;top:326px;width:121px;height:19px;box-shadow:inset 1px 1px #808080,inset -1px -1px #fff,inset 2px 2px #000,inset -2px -2px #dfdfdf;background:#fff;"></div>
<div class="t" style="right:152px;text-align:right;top:329.84px;font:normal 12px/12px 'Liberation Sans', sans-serif;color:#000;transform:scaleX(0.912);transform-origin:100% 50%;">$100,000.00</div>
<div class="t" style="right:273px;text-align:right;top:353.84px;font:normal 12px/12px 'Liberation Sans', sans-serif;color:#000;transform:scaleX(0.888);transform-origin:100% 50%;">Future Value =</div>
<div class="r" style="left:407px;top:350px;width:121px;height:19px;box-shadow:inset 1px 1px #808080,inset -1px -1px #fff,inset 2px 2px #000,inset -2px -2px #dfdfdf;background:#fff;"></div>
<div class="t" style="right:152px;text-align:right;top:354.84px;font:normal 12px/12px 'Liberation Sans', sans-serif;color:#000;transform:scaleX(0.912);transform-origin:100% 50%;">$602,257.68</div>
<div class="t" style="right:273px;text-align:right;top:379.84px;font:normal 12px/12px 'Liberation Sans', sans-serif;color:#000;transform:scaleX(0.89);transform-origin:100% 50%;">Interest Rate per Period =</div>
<div class="r" style="left:407px;top:377px;width:121px;height:19px;box-shadow:inset 1px 1px #808080,inset -1px -1px #fff,inset 2px 2px #000,inset -2px -2px #dfdfdf;background:#fff;"></div>
<div class="t" style="right:152px;text-align:right;top:380.84px;font:normal 12px/12px 'Liberation Sans', sans-serif;color:#000;transform:scaleX(0.912);transform-origin:100% 50%;">6.167782%</div>
<div class="t" style="right:273px;text-align:right;top:403.84px;font:normal 12px/12px 'Liberation Sans', sans-serif;color:#000;transform:scaleX(0.866);transform-origin:100% 50%;">Number of Periods =</div>
<div class="r" style="left:407px;top:402px;width:121px;height:19px;box-shadow:inset 1px 1px #808080,inset -1px -1px #fff,inset 2px 2px #000,inset -2px -2px #dfdfdf;background:#fff;"></div>
<div class="t" style="right:152px;text-align:right;top:404.84px;font:normal 12px/12px 'Liberation Sans', sans-serif;color:#000;transform:scaleX(0.912);transform-origin:100% 50%;">30.00</div>
<div class="r" style="left:556px;top:380px;width:81px;height:33px;background:#c0c0c0;box-shadow:inset 1px 1px #000,inset -1px -1px #000,inset 2px 2px #fff,inset -2px -2px #000,inset -3px -3px #808080;"></div>
<div class="r" style="left:560px;top:384px;width:73px;height:25px;border:1px dotted #000;box-sizing:border-box;"></div>
<div class="t" style="left:583px;top:389.84px;font:normal 12px/12px 'Liberation Sans', sans-serif;color:#000;transform:scaleX(0.9);transform-origin:0 50%;"><u>C</u>lose</div>
</div></div></body></html>
